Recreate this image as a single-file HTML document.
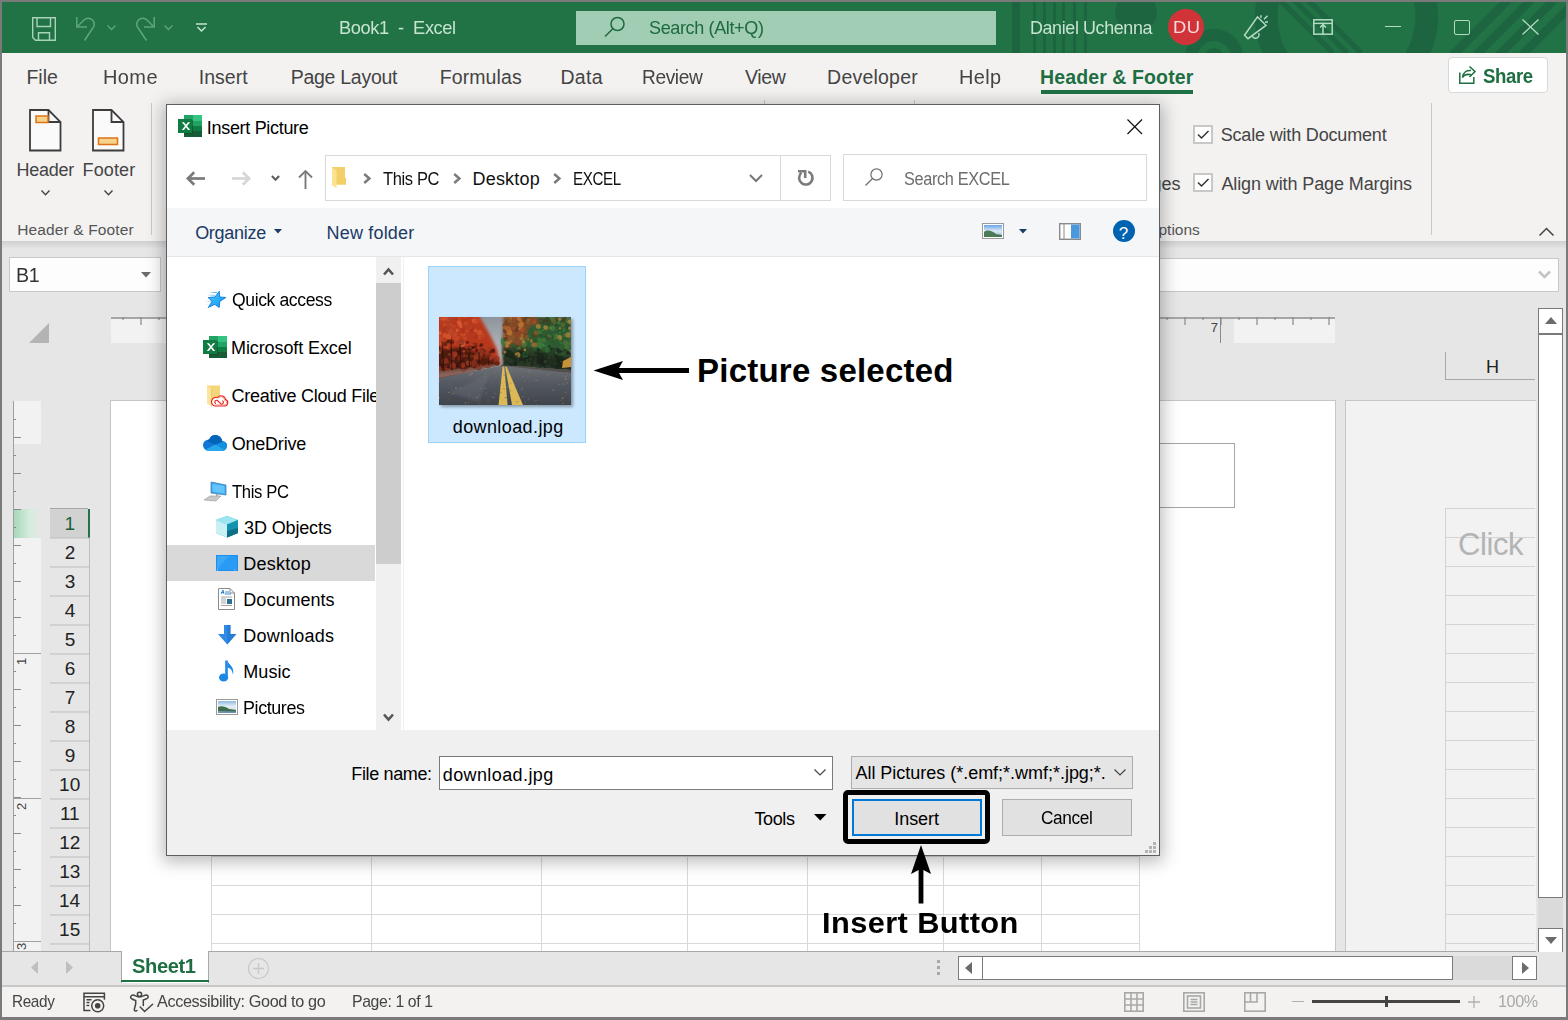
<!DOCTYPE html>
<html><head><meta charset="utf-8"><style>
html,body{margin:0;padding:0;width:1568px;height:1020px;overflow:hidden;background:#e6e6e6;}
body{position:relative;font-family:"Liberation Sans",sans-serif;}
.a{position:absolute;}
.t{position:absolute;white-space:pre;line-height:normal;}
svg{overflow:visible;}
</style></head><body>
<div class="a" style="left:0px;top:0px;width:1568px;height:1020px;background:#e6e6e6;"></div>
<div class="a" style="left:2px;top:2px;width:1564px;height:51px;background:#217346;"></div>
<svg class="a" style="left:1000px;top:2px;" width="566" height="51" viewBox="0 0 566 51">
<defs><clipPath id="tb"><rect x="0" y="0" width="566" height="51"/></clipPath></defs>
<g clip-path="url(#tb)" fill="none" stroke="#1d6440">
<rect x="12" y="0" width="8" height="51" fill="#1d6440" stroke="none"/>
<rect x="33" y="0" width="3" height="51" fill="#1d6440" stroke="none"/>
<rect x="43" y="0" width="3" height="51" fill="#1d6440" stroke="none"/>
<rect x="53" y="0" width="3" height="51" fill="#1d6440" stroke="none"/>
<rect x="62" y="0" width="3" height="51" fill="#1d6440" stroke="none"/>
<rect x="73" y="0" width="3" height="51" fill="#1d6440" stroke="none"/>
<rect x="84" y="0" width="3" height="51" fill="#1d6440" stroke="none"/>
<circle cx="136" cy="10" r="21" fill="#1d6440" stroke="none"/>
<circle cx="214" cy="56" r="10" fill="#1d6440" stroke="none"/>
<circle cx="214" cy="56" r="23" stroke-width="12"/>
<circle cx="346.5" cy="14.5" r="80.3" stroke-width="22.6"/>
<path d="M280 -2L333 51M294 -2L347 51M308 -2L361 51" stroke-width="5.5"/>
<path d="M453 53L508 -2M476 53L531 -2M499 53L554 -2M522 53L577 -2" stroke-width="8.5"/>
</g></svg>
<svg class="a" style="left:32px;top:17px;" width="24" height="24" viewBox="0 0 24 24"><g fill="none" stroke="#a9d3b9" stroke-width="1.4"><path d="M0.7 0.7H23.3V23.3H3.5L0.7 20.5Z"/><path d="M5 0.7V9.5H18.5V0.7"/><path d="M6.5 23.3V15.8H17.5V23.3"/></g></svg>
<svg class="a" style="left:76px;top:17px;" width="22" height="24" viewBox="0 0 22 24"><g fill="none" stroke="#5fa57d" stroke-width="1.5"><path d="M0.8 0V10H11"/><path d="M1.5 9.5L8 3A6 6 0 0 1 16.5 11.5L8.5 23.5"/></g></svg>
<svg class="a" style="left:107px;top:25px;" width="9" height="6" viewBox="0 0 9 6"><path d="M0.5 0.5L4.5 4.5L8.5 0.5" fill="none" stroke="#5fa57d" stroke-width="1.3"/></svg>
<svg class="a" style="left:133px;top:17px;" width="22" height="24" viewBox="0 0 22 24"><g fill="none" stroke="#5fa57d" stroke-width="1.5"><path d="M21.2 0V10H11"/><path d="M20.5 9.5L14 3A6 6 0 0 0 5.5 11.5L13.5 23.5"/></g></svg>
<svg class="a" style="left:164px;top:25px;" width="9" height="6" viewBox="0 0 9 6"><path d="M0.5 0.5L4.5 4.5L8.5 0.5" fill="none" stroke="#5fa57d" stroke-width="1.3"/></svg>
<svg class="a" style="left:196px;top:23px;" width="11" height="9" viewBox="0 0 11 9"><g fill="none" stroke="#c8e5d2" stroke-width="1.5"><path d="M0 1H11"/><path d="M1.5 4L5.5 8L9.5 4"/></g></svg>
<div class="t" style="left:338.50px;top:17.20px;font-size:19px;color:#c6e4d0;letter-spacing:-0.400px;transform:scaleX(0.9587);transform-origin:0 0;">Book1  -  Excel</div>
<div class="a" style="left:576px;top:11px;width:420px;height:33.5px;background:#a0cdb3;"></div>
<svg class="a" style="left:604px;top:16px;" width="22" height="22" viewBox="0 0 22 22"><g fill="none" stroke="#1e6a40" stroke-width="1.5"><circle cx="13.5" cy="8" r="6.5"/><path d="M8.8 12.7L1 20.5"/></g></svg>
<div class="t" style="left:649.19px;top:16.50px;font-size:19px;color:#1e6a40;letter-spacing:-0.400px;transform:scaleX(0.9499);transform-origin:0 0;">Search (Alt+Q)</div>
<div class="t" style="left:1029.52px;top:16.50px;font-size:19px;color:#c6e4d0;letter-spacing:-0.400px;transform:scaleX(0.9419);transform-origin:0 0;">Daniel Uchenna</div>
<svg class="a" style="left:1168px;top:9px;" width="36" height="36" viewBox="0 0 36 36"><circle cx="18" cy="18" r="18" fill="#d13438"/></svg>
<div class="t" style="left:1172.99px;top:18.00px;font-size:17px;color:#f6dcdc;letter-spacing:0.400px;transform:scaleX(1.0789);transform-origin:0 0;">DU</div>
<svg class="a" style="left:1243px;top:14px;" width="27" height="27" viewBox="0 0 27 27"><g fill="none" stroke="#b4dcc2" stroke-width="1.5"><path d="M1.5 21.2L14.5 2.9L23 11.3L5 24.7Z"/><path d="M9.5 22.3A3.2 3.2 0 0 0 15.6 19.2"/><path d="M18 1.2V3.8M21 5.3L24.5 1.8M22 7.9H25"/></g></svg>
<svg class="a" style="left:1313px;top:19px;" width="20" height="16" viewBox="0 0 20 16"><g fill="none" stroke="#b4dcc2" stroke-width="1.5"><rect x="0.8" y="0.8" width="18.4" height="14.4"/><path d="M0.8 4.4H19.2"/><path d="M10 15V5.5M7 8.5L10 5.5L13 8.5"/></g></svg>
<div class="a" style="left:1385px;top:26px;width:16px;height:1.3px;background:#b4dcc2;"></div>
<div class="a" style="left:1454px;top:19.5px;width:15.5px;height:15.5px;border:1.3px solid #b4dcc2;border-radius:2px;box-sizing:border-box;"></div>
<svg class="a" style="left:1522px;top:19px;" width="17" height="16" viewBox="0 0 17 16"><path d="M0.5 0.5L16.5 15.5M16.5 0.5L0.5 15.5" stroke="#b4dcc2" stroke-width="1.3"/></svg>
<div class="a" style="left:0px;top:0px;width:1568px;height:2px;background:#7a7a7a;"></div>
<div class="a" style="left:0px;top:0px;width:2px;height:1020px;background:#7a7a7a;"></div>
<div class="a" style="left:1566px;top:0px;width:2px;height:1020px;background:#7a7a7a;"></div>
<div class="a" style="left:0px;top:1017px;width:1568px;height:3px;background:#7a7a7a;"></div>
<div class="a" style="left:2px;top:53px;width:1564px;height:188px;background:#f3f2f1;"></div>
<div class="a" style="left:2px;top:241px;width:1564px;height:8px;background:linear-gradient(#cfcfcf,#e6e6e6);"></div>
<div class="t" style="left:26.39px;top:66.20px;font-size:19.5px;color:#444444;letter-spacing:0.014px;">File</div>
<div class="t" style="left:103.35px;top:66.20px;font-size:19.5px;color:#444444;letter-spacing:0.400px;transform:scaleX(1.0241);transform-origin:0 0;">Home</div>
<div class="t" style="left:198.70px;top:66.20px;font-size:19.5px;color:#444444;letter-spacing:0.040px;">Insert</div>
<div class="t" style="left:290.69px;top:66.20px;font-size:19.5px;color:#444444;letter-spacing:-0.274px;">Page Layout</div>
<div class="t" style="left:439.69px;top:66.20px;font-size:19.5px;color:#444444;letter-spacing:0.104px;">Formulas</div>
<div class="t" style="left:560.39px;top:66.20px;font-size:19.5px;color:#444444;letter-spacing:0.338px;">Data</div>
<div class="t" style="left:642.12px;top:66.20px;font-size:19.5px;color:#444444;letter-spacing:-0.400px;transform:scaleX(0.9818);transform-origin:0 0;">Review</div>
<div class="t" style="left:744.90px;top:66.20px;font-size:19.5px;color:#444444;letter-spacing:-0.359px;">View</div>
<div class="t" style="left:827.09px;top:66.20px;font-size:19.5px;color:#444444;letter-spacing:0.216px;">Developer</div>
<div class="t" style="left:958.66px;top:66.20px;font-size:19.5px;color:#444444;letter-spacing:0.400px;transform:scaleX(1.0210);transform-origin:0 0;">Help</div>
<div class="t" style="left:1040.08px;top:66.20px;font-size:19.5px;color:#1e6e42;font-weight:bold;letter-spacing:0.107px;">Header &amp; Footer</div>
<div class="a" style="left:1041px;top:90.3px;width:152px;height:4px;background:#1e7145;"></div>
<div class="a" style="left:1447.5px;top:57px;width:100px;height:35.5px;background:#fff;border:1px solid #d8d8d8;border-radius:4px;box-sizing:border-box;"></div>
<svg class="a" style="left:1459px;top:66px;" width="17" height="18" viewBox="0 0 17 18"><g fill="none" stroke="#1e6e42" stroke-width="1.5"><path d="M0.8 6.5V17.2H14.8V11"/><path d="M3.5 11.5C4 6 8 4 12 4.5"/><path d="M3.5 11.5C5 8.5 9 8 12.5 8.8"/><path d="M10.5 0.5L16 5.5L10.5 11"/></g></svg>
<div class="t" style="left:1483.44px;top:65.00px;font-size:20px;color:#1e6e42;font-weight:bold;letter-spacing:-0.400px;transform:scaleX(0.9298);transform-origin:0 0;">Share</div>
<svg class="a" style="left:29px;top:109px;" width="33" height="43" viewBox="0 0 33 43"><path d="M1 1H19.5L31.5 13V41.5H1Z" fill="#fafafa" stroke="#3c3c3c" stroke-width="1.8"/><path d="M19.5 1V13H31.5" fill="none" stroke="#3c3c3c" stroke-width="1.8"/><rect x="7" y="7" width="12" height="6.5" fill="#f6d38b" stroke="#e07318" stroke-width="1.5"/></svg>
<svg class="a" style="left:92px;top:109px;" width="33" height="43" viewBox="0 0 33 43"><path d="M1 1H19.5L31.5 13V41.5H1Z" fill="#fafafa" stroke="#3c3c3c" stroke-width="1.8"/><path d="M19.5 1V13H31.5" fill="none" stroke="#3c3c3c" stroke-width="1.8"/><rect x="6.5" y="29" width="19" height="6.5" fill="#f6d38b" stroke="#e07318" stroke-width="1.5"/></svg>
<div class="t" style="left:16.52px;top:160.00px;font-size:18px;color:#444444;letter-spacing:-0.257px;">Header</div>
<div class="t" style="left:82.52px;top:160.00px;font-size:18px;color:#444444;letter-spacing:0.147px;">Footer</div>
<svg class="a" style="left:41px;top:190px;" width="9" height="6" viewBox="0 0 9 6"><path d="M0.5 0.5L4.5 4.8L8.5 0.5" fill="none" stroke="#444" stroke-width="1.4"/></svg>
<svg class="a" style="left:104px;top:190px;" width="9" height="6" viewBox="0 0 9 6"><path d="M0.5 0.5L4.5 4.8L8.5 0.5" fill="none" stroke="#444" stroke-width="1.4"/></svg>
<div class="t" style="left:17.22px;top:220.60px;font-size:15.5px;color:#555;letter-spacing:0.138px;">Header &amp; Footer</div>
<div class="a" style="left:151px;top:103px;width:1px;height:132px;background:#c8c8c8;"></div>
<div class="a" style="left:764px;top:100px;width:1px;height:4px;background:#c8c8c8;"></div>
<div class="a" style="left:914px;top:100px;width:1px;height:4px;background:#c8c8c8;"></div>
<div class="a" style="left:1431px;top:103px;width:1px;height:132px;background:#c8c8c8;"></div>
<div class="t" style="left:954.82px;top:174.00px;font-size:18px;color:#444444;">Different Odd &amp; Even Pages</div>
<div class="a" style="left:1193px;top:124.5px;width:19.5px;height:19px;background:#fff;border:2px solid #c8c8c8;box-sizing:border-box;"></div>
<svg class="a" style="left:1196.5px;top:129.5px;" width="13" height="10" viewBox="0 0 13 10"><path d="M1 4.5L4.5 8L11.5 1" fill="none" stroke="#333" stroke-width="1.5"/></svg>
<div class="a" style="left:1193px;top:173.3px;width:19.5px;height:19px;background:#fff;border:2px solid #c8c8c8;box-sizing:border-box;"></div>
<svg class="a" style="left:1196.5px;top:178.3px;" width="13" height="10" viewBox="0 0 13 10"><path d="M1 4.5L4.5 8L11.5 1" fill="none" stroke="#333" stroke-width="1.5"/></svg>
<div class="t" style="left:1220.69px;top:125.30px;font-size:18px;color:#444444;letter-spacing:-0.173px;">Scale with Document</div>
<div class="t" style="left:1221.45px;top:174.00px;font-size:18px;color:#444444;letter-spacing:-0.110px;">Align with Page Margins</div>
<div class="t" style="left:1146.41px;top:220.60px;font-size:15.5px;color:#555;">Options</div>
<svg class="a" style="left:1539px;top:227px;" width="15" height="9" viewBox="0 0 15 9"><path d="M0.5 8.5L7.5 1.5L14.5 8.5" fill="none" stroke="#444" stroke-width="1.5"/></svg>
<div class="a" style="left:9px;top:257px;width:151.5px;height:34.5px;background:#fdfdfd;border:1px solid #c8c8c8;box-sizing:border-box;"></div>
<div class="t" style="left:15.88px;top:264.00px;font-size:20px;color:#333;letter-spacing:-0.400px;transform:scaleX(0.9790);transform-origin:0 0;">B1</div>
<svg class="a" style="left:141px;top:272px;" width="10" height="6" viewBox="0 0 10 6"><path d="M0 0H10L5 5.5Z" fill="#6b6b6b"/></svg>
<div class="a" style="left:600px;top:257.5px;width:958.5px;height:34px;background:#fdfdfd;border:1px solid #c8c8c8;box-sizing:border-box;"></div>
<svg class="a" style="left:1538px;top:270px;" width="13" height="9" viewBox="0 0 13 9"><path d="M1 1.5L6.5 7L12 1.5" fill="none" stroke="#c4c4c4" stroke-width="2.5"/></svg>
<svg class="a" style="left:29px;top:322.5px;" width="20" height="20" viewBox="0 0 20 20"><path d="M20 0V20H0Z" fill="#b4b4b4"/></svg>
<div class="a" style="left:111px;top:317px;width:1224px;height:26px;background:#f2f2f2;"></div>
<div class="a" style="left:211px;top:317px;width:1023px;height:26px;background:#e6e6e6;"></div>
<div class="a" style="left:111px;top:317px;width:1224px;height:1.5px;background:#a6a6a6;"></div>
<svg class="a" style="left:111px;top:317px;" width="1224" height="26" viewBox="0 0 1224 26"><rect x="11.4" y="0" width="1.2" height="3" fill="#8a8a8a"/><rect x="29.4" y="0" width="1.2" height="8" fill="#8a8a8a"/><rect x="47.4" y="0" width="1.2" height="3" fill="#8a8a8a"/><rect x="65.4" y="0" width="1.2" height="8" fill="#8a8a8a"/><rect x="83.4" y="0" width="1.2" height="3" fill="#8a8a8a"/><rect x="101.4" y="0" width="1.2" height="8" fill="#8a8a8a"/><rect x="119.4" y="0" width="1.2" height="3" fill="#8a8a8a"/><rect x="137.4" y="0" width="1.2" height="8" fill="#8a8a8a"/><rect x="155.4" y="0" width="1.2" height="3" fill="#8a8a8a"/><rect x="173.4" y="0" width="1.2" height="8" fill="#8a8a8a"/><rect x="191.4" y="0" width="1.2" height="3" fill="#8a8a8a"/><rect x="209.4" y="0" width="1.2" height="8" fill="#8a8a8a"/><rect x="227.4" y="0" width="1.2" height="3" fill="#8a8a8a"/><rect x="245.4" y="0" width="1.2" height="8" fill="#8a8a8a"/><rect x="263.4" y="0" width="1.2" height="3" fill="#8a8a8a"/><rect x="281.4" y="0" width="1.2" height="8" fill="#8a8a8a"/><rect x="299.4" y="0" width="1.2" height="3" fill="#8a8a8a"/><rect x="317.4" y="0" width="1.2" height="8" fill="#8a8a8a"/><rect x="335.4" y="0" width="1.2" height="3" fill="#8a8a8a"/><rect x="353.4" y="0" width="1.2" height="8" fill="#8a8a8a"/><rect x="371.4" y="0" width="1.2" height="3" fill="#8a8a8a"/><rect x="389.4" y="0" width="1.2" height="8" fill="#8a8a8a"/><rect x="407.4" y="0" width="1.2" height="3" fill="#8a8a8a"/><rect x="425.4" y="0" width="1.2" height="8" fill="#8a8a8a"/><rect x="443.4" y="0" width="1.2" height="3" fill="#8a8a8a"/><rect x="461.4" y="0" width="1.2" height="8" fill="#8a8a8a"/><rect x="479.4" y="0" width="1.2" height="3" fill="#8a8a8a"/><rect x="497.4" y="0" width="1.2" height="8" fill="#8a8a8a"/><rect x="515.4" y="0" width="1.2" height="3" fill="#8a8a8a"/><rect x="533.4" y="0" width="1.2" height="8" fill="#8a8a8a"/><rect x="551.4" y="0" width="1.2" height="3" fill="#8a8a8a"/><rect x="569.4" y="0" width="1.2" height="8" fill="#8a8a8a"/><rect x="587.4" y="0" width="1.2" height="3" fill="#8a8a8a"/><rect x="605.4" y="0" width="1.2" height="8" fill="#8a8a8a"/><rect x="623.4" y="0" width="1.2" height="3" fill="#8a8a8a"/><rect x="641.4" y="0" width="1.2" height="8" fill="#8a8a8a"/><rect x="659.4" y="0" width="1.2" height="3" fill="#8a8a8a"/><rect x="677.4" y="0" width="1.2" height="8" fill="#8a8a8a"/><rect x="695.4" y="0" width="1.2" height="3" fill="#8a8a8a"/><rect x="713.4" y="0" width="1.2" height="8" fill="#8a8a8a"/><rect x="731.4" y="0" width="1.2" height="3" fill="#8a8a8a"/><rect x="749.4" y="0" width="1.2" height="8" fill="#8a8a8a"/><rect x="767.4" y="0" width="1.2" height="3" fill="#8a8a8a"/><rect x="785.4" y="0" width="1.2" height="8" fill="#8a8a8a"/><rect x="803.4" y="0" width="1.2" height="3" fill="#8a8a8a"/><rect x="821.4" y="0" width="1.2" height="8" fill="#8a8a8a"/><rect x="839.4" y="0" width="1.2" height="3" fill="#8a8a8a"/><rect x="857.4" y="0" width="1.2" height="8" fill="#8a8a8a"/><rect x="875.4" y="0" width="1.2" height="3" fill="#8a8a8a"/><rect x="893.4" y="0" width="1.2" height="8" fill="#8a8a8a"/><rect x="911.4" y="0" width="1.2" height="3" fill="#8a8a8a"/><rect x="929.4" y="0" width="1.2" height="8" fill="#8a8a8a"/><rect x="947.4" y="0" width="1.2" height="3" fill="#8a8a8a"/><rect x="965.4" y="0" width="1.2" height="8" fill="#8a8a8a"/><rect x="983.4" y="0" width="1.2" height="3" fill="#8a8a8a"/><rect x="1001.4" y="0" width="1.2" height="8" fill="#8a8a8a"/><rect x="1019.4" y="0" width="1.2" height="3" fill="#8a8a8a"/><rect x="1037.4" y="0" width="1.2" height="8" fill="#8a8a8a"/><rect x="1055.4" y="0" width="1.2" height="3" fill="#8a8a8a"/><rect x="1073.4" y="0" width="1.2" height="8" fill="#8a8a8a"/><rect x="1091.4" y="0" width="1.2" height="3" fill="#8a8a8a"/><rect x="1109.4" y="0" width="1.2" height="8" fill="#8a8a8a"/><rect x="1127.4" y="0" width="1.2" height="3" fill="#8a8a8a"/><rect x="1145.4" y="0" width="1.2" height="8" fill="#8a8a8a"/><rect x="1163.4" y="0" width="1.2" height="3" fill="#8a8a8a"/><rect x="1181.4" y="0" width="1.2" height="8" fill="#8a8a8a"/><rect x="1199.4" y="0" width="1.2" height="3" fill="#8a8a8a"/><rect x="1217.4" y="0" width="1.2" height="8" fill="#8a8a8a"/></svg>
<div class="a" style="left:1220px;top:317px;width:1.2px;height:26px;background:#8a8a8a;"></div>
<div class="t" style="left:1210.85px;top:319.50px;font-size:13px;color:#444;">7</div>
<div class="a" style="left:1445px;top:352px;width:90px;height:28px;background:#e6e6e6;"></div>
<div class="a" style="left:1445px;top:352px;width:1px;height:28px;background:#a8a8a8;"></div>
<div class="a" style="left:1445px;top:379px;width:90px;height:1px;background:#a8a8a8;"></div>
<div class="t" style="left:1486.02px;top:357.00px;font-size:18px;color:#222;">H</div>
<div class="a" style="left:110px;top:400px;width:1226px;height:552px;background:#ffffff;border:1px solid #c6c6c6;box-sizing:border-box;"></div>
<div class="a" style="left:211px;top:443px;width:1024px;height:65px;border:1px solid #a6a6a6;box-sizing:border-box;"></div>
<svg class="a" style="left:0px;top:400px;" width="1336" height="551" viewBox="0 0 1336 551"><path d="M211 108.5H1140" stroke="#d9d9d9" stroke-width="1"/><path d="M211 137.5H1140" stroke="#d9d9d9" stroke-width="1"/><path d="M211 166.5H1140" stroke="#d9d9d9" stroke-width="1"/><path d="M211 195.5H1140" stroke="#d9d9d9" stroke-width="1"/><path d="M211 224.5H1140" stroke="#d9d9d9" stroke-width="1"/><path d="M211 253.5H1140" stroke="#d9d9d9" stroke-width="1"/><path d="M211 282.5H1140" stroke="#d9d9d9" stroke-width="1"/><path d="M211 311.5H1140" stroke="#d9d9d9" stroke-width="1"/><path d="M211 340.5H1140" stroke="#d9d9d9" stroke-width="1"/><path d="M211 369.5H1140" stroke="#d9d9d9" stroke-width="1"/><path d="M211 398.5H1140" stroke="#d9d9d9" stroke-width="1"/><path d="M211 427.5H1140" stroke="#d9d9d9" stroke-width="1"/><path d="M211 456.5H1140" stroke="#d9d9d9" stroke-width="1"/><path d="M211 485.5H1140" stroke="#d9d9d9" stroke-width="1"/><path d="M211 514.5H1140" stroke="#d9d9d9" stroke-width="1"/><path d="M211 543.5H1140" stroke="#d9d9d9" stroke-width="1"/><path d="M211.5 108V551" stroke="#d9d9d9" stroke-width="1"/><path d="M371.5 108V551" stroke="#d9d9d9" stroke-width="1"/><path d="M541.5 108V551" stroke="#d9d9d9" stroke-width="1"/><path d="M687.5 108V551" stroke="#d9d9d9" stroke-width="1"/><path d="M807.5 108V551" stroke="#d9d9d9" stroke-width="1"/><path d="M943.5 108V551" stroke="#d9d9d9" stroke-width="1"/><path d="M1041.5 108V551" stroke="#d9d9d9" stroke-width="1"/><path d="M1139.5 108V551" stroke="#d9d9d9" stroke-width="1"/></svg>
<div class="a" style="left:1344.5px;top:400px;width:221.5px;height:552px;background:#f2f2f2;"></div>
<div class="a" style="left:1344.5px;top:400px;width:1px;height:552px;background:#c6c6c6;"></div>
<div class="a" style="left:1344.5px;top:400px;width:191.5px;height:1px;background:#c6c6c6;"></div>
<svg class="a" style="left:1445px;top:400px;" width="90" height="551" viewBox="0 0 90 551"><path d="M0 108.5H90" stroke="#d4d4d4" stroke-width="1"/><path d="M0 137.5H90" stroke="#d4d4d4" stroke-width="1"/><path d="M0 166.5H90" stroke="#d4d4d4" stroke-width="1"/><path d="M0 195.5H90" stroke="#d4d4d4" stroke-width="1"/><path d="M0 224.5H90" stroke="#d4d4d4" stroke-width="1"/><path d="M0 253.5H90" stroke="#d4d4d4" stroke-width="1"/><path d="M0 282.5H90" stroke="#d4d4d4" stroke-width="1"/><path d="M0 311.5H90" stroke="#d4d4d4" stroke-width="1"/><path d="M0 340.5H90" stroke="#d4d4d4" stroke-width="1"/><path d="M0 369.5H90" stroke="#d4d4d4" stroke-width="1"/><path d="M0 398.5H90" stroke="#d4d4d4" stroke-width="1"/><path d="M0 427.5H90" stroke="#d4d4d4" stroke-width="1"/><path d="M0 456.5H90" stroke="#d4d4d4" stroke-width="1"/><path d="M0 485.5H90" stroke="#d4d4d4" stroke-width="1"/><path d="M0 514.5H90" stroke="#d4d4d4" stroke-width="1"/><path d="M0 543.5H90" stroke="#d4d4d4" stroke-width="1"/><path d="M0.5 108V551" stroke="#d4d4d4" stroke-width="1"/></svg>
<div class="t" style="left:1457.95px;top:527.00px;font-size:31px;color:#b4b4b4;letter-spacing:-0.400px;">Click</div>
<div class="a" style="left:1536px;top:300px;width:30px;height:652px;background:#e6e6e6;"></div>
<div class="a" style="left:50px;top:508.5px;width:40px;height:442.5px;background:#e6e6e6;"></div>
<div class="a" style="left:50px;top:508.5px;width:38px;height:29px;background:#d2d2d2;"></div>
<div class="a" style="left:88px;top:508.5px;width:2px;height:29px;background:#217346;"></div>
<svg class="a" style="left:50px;top:508.5px;" width="40" height="443" viewBox="0 0 40 443"><path d="M0 29.0H40" stroke="#bdbdbd" stroke-width="1"/><path d="M0 58.0H40" stroke="#bdbdbd" stroke-width="1"/><path d="M0 87.0H40" stroke="#bdbdbd" stroke-width="1"/><path d="M0 116.0H40" stroke="#bdbdbd" stroke-width="1"/><path d="M0 145.0H40" stroke="#bdbdbd" stroke-width="1"/><path d="M0 174.0H40" stroke="#bdbdbd" stroke-width="1"/><path d="M0 203.0H40" stroke="#bdbdbd" stroke-width="1"/><path d="M0 232.0H40" stroke="#bdbdbd" stroke-width="1"/><path d="M0 261.0H40" stroke="#bdbdbd" stroke-width="1"/><path d="M0 290.0H40" stroke="#bdbdbd" stroke-width="1"/><path d="M0 319.0H40" stroke="#bdbdbd" stroke-width="1"/><path d="M0 348.0H40" stroke="#bdbdbd" stroke-width="1"/><path d="M0 377.0H40" stroke="#bdbdbd" stroke-width="1"/><path d="M0 406.0H40" stroke="#bdbdbd" stroke-width="1"/><path d="M0 435.0H40" stroke="#bdbdbd" stroke-width="1"/><path d="M0 464.0H40" stroke="#bdbdbd" stroke-width="1"/><path d="M39.5 29V443" stroke="#bdbdbd" stroke-width="1"/></svg>
<div class="t" style="left:64.47px;top:513.30px;font-size:19px;color:#1f5f3b;">1</div>
<div class="t" style="left:64.73px;top:542.30px;font-size:19px;color:#222;">2</div>
<div class="t" style="left:64.77px;top:571.30px;font-size:19px;color:#222;">3</div>
<div class="t" style="left:64.78px;top:600.30px;font-size:19px;color:#222;">4</div>
<div class="t" style="left:64.73px;top:629.30px;font-size:19px;color:#222;">5</div>
<div class="t" style="left:64.66px;top:658.30px;font-size:19px;color:#222;">6</div>
<div class="t" style="left:64.73px;top:687.30px;font-size:19px;color:#222;">7</div>
<div class="t" style="left:64.73px;top:716.30px;font-size:19px;color:#222;">8</div>
<div class="t" style="left:64.70px;top:745.30px;font-size:19px;color:#222;">9</div>
<div class="t" style="left:59.10px;top:774.30px;font-size:19px;color:#222;">10</div>
<div class="t" style="left:59.88px;top:803.30px;font-size:19px;color:#222;">11</div>
<div class="t" style="left:59.22px;top:832.30px;font-size:19px;color:#222;">12</div>
<div class="t" style="left:59.15px;top:861.30px;font-size:19px;color:#222;">13</div>
<div class="t" style="left:59.00px;top:890.30px;font-size:19px;color:#222;">14</div>
<div class="t" style="left:59.12px;top:919.30px;font-size:19px;color:#222;">15</div>
<div class="a" style="left:50px;top:508px;width:38px;height:1px;background:#a8a8a8;"></div>
<div class="a" style="left:13px;top:401px;width:28px;height:550px;background:#f2f2f2;"></div>
<div class="a" style="left:13px;top:444px;width:28px;height:65px;background:#e6e6e6;"></div>
<div class="a" style="left:13px;top:509px;width:28px;height:29px;background:linear-gradient(90deg,#a3d7b8,#d6ecdd 60%,#e6e6e6);"></div>
<div class="a" style="left:12.5px;top:401px;width:1px;height:550px;background:#a0a0a0;"></div>
<svg class="a" style="left:14px;top:401px;" width="27" height="550" viewBox="0 0 27 550"><rect x="0" y="18" width="2" height="1" fill="#8a8a8a"/><rect x="0" y="36" width="7" height="1" fill="#8a8a8a"/><rect x="0" y="54" width="2" height="1" fill="#8a8a8a"/><rect x="0" y="72" width="7" height="1" fill="#8a8a8a"/><rect x="0" y="90" width="2" height="1" fill="#8a8a8a"/><rect x="0" y="108" width="7" height="1" fill="#8a8a8a"/><rect x="0" y="126" width="2" height="1" fill="#8a8a8a"/><rect x="0" y="144" width="7" height="1" fill="#8a8a8a"/><rect x="0" y="162" width="2" height="1" fill="#8a8a8a"/><rect x="0" y="180" width="7" height="1" fill="#8a8a8a"/><rect x="0" y="198" width="2" height="1" fill="#8a8a8a"/><rect x="0" y="216" width="7" height="1" fill="#8a8a8a"/><rect x="0" y="234" width="2" height="1" fill="#8a8a8a"/><rect x="0" y="252" width="7" height="1" fill="#8a8a8a"/><rect x="0" y="270" width="2" height="1" fill="#8a8a8a"/><rect x="0" y="288" width="7" height="1" fill="#8a8a8a"/><rect x="0" y="306" width="2" height="1" fill="#8a8a8a"/><rect x="0" y="324" width="7" height="1" fill="#8a8a8a"/><rect x="0" y="342" width="2" height="1" fill="#8a8a8a"/><rect x="0" y="360" width="7" height="1" fill="#8a8a8a"/><rect x="0" y="378" width="2" height="1" fill="#8a8a8a"/><rect x="0" y="396" width="7" height="1" fill="#8a8a8a"/><rect x="0" y="414" width="2" height="1" fill="#8a8a8a"/><rect x="0" y="432" width="7" height="1" fill="#8a8a8a"/><rect x="0" y="450" width="2" height="1" fill="#8a8a8a"/><rect x="0" y="468" width="7" height="1" fill="#8a8a8a"/><rect x="0" y="486" width="2" height="1" fill="#8a8a8a"/><rect x="0" y="504" width="7" height="1" fill="#8a8a8a"/><rect x="0" y="522" width="2" height="1" fill="#8a8a8a"/><rect x="0" y="540" width="7" height="1" fill="#8a8a8a"/></svg>
<div class="a" style="left:13px;top:653px;width:28px;height:1px;background:#a0a0a0;"></div>
<div class="a" style="left:13px;top:797.5px;width:28px;height:1px;background:#a0a0a0;"></div>
<div class="t" style="left:18px;top:655px;font-size:13px;line-height:13px;color:#444;transform:rotate(-90deg);">1</div>
<div class="t" style="left:18px;top:800px;font-size:13px;line-height:13px;color:#444;transform:rotate(-90deg);">2</div>
<div class="a" style="left:13px;top:941px;width:28px;height:1px;background:#a0a0a0;"></div>
<div class="t" style="left:18px;top:940px;font-size:13px;line-height:13px;color:#444;transform:rotate(-90deg);">3</div>
<div class="a" style="left:1538px;top:308px;width:25px;height:644px;background:#dadada;"></div>
<div class="a" style="left:1538px;top:308px;width:25px;height:25.5px;background:#fff;border:1px solid #7a7a7a;box-sizing:border-box;"></div>
<svg class="a" style="left:1544.5px;top:317px;" width="12" height="7" viewBox="0 0 12 7"><path d="M0 7H12L6 0Z" fill="#6b6b6b"/></svg>
<div class="a" style="left:1538px;top:334px;width:25px;height:563.5px;background:#fff;border:1px solid #7a7a7a;box-sizing:border-box;"></div>
<div class="a" style="left:1538px;top:928px;width:25px;height:24.5px;background:#fff;border:1px solid #7a7a7a;box-sizing:border-box;"></div>
<svg class="a" style="left:1544.5px;top:937px;" width="12" height="7" viewBox="0 0 12 7"><path d="M0 0H12L6 7Z" fill="#6b6b6b"/></svg>
<div class="a" style="left:2px;top:951px;width:1534px;height:1px;background:#9a9a9a;"></div>
<div class="a" style="left:2px;top:952px;width:1564px;height:33.5px;background:#e6e6e6;"></div>
<div class="a" style="left:2px;top:950.5px;width:119px;height:1.5px;background:#a8a8a8;"></div>
<div class="a" style="left:208px;top:950.5px;width:1328px;height:1.5px;background:#a8a8a8;"></div>
<svg class="a" style="left:30.5px;top:961px;" width="7" height="13" viewBox="0 0 7 13"><path d="M7 0V13L0 6.5Z" fill="#bfbfbf"/></svg>
<svg class="a" style="left:65.5px;top:961px;" width="7" height="13" viewBox="0 0 7 13"><path d="M0 0V13L7 6.5Z" fill="#bfbfbf"/></svg>
<div class="a" style="left:120.5px;top:951px;width:88px;height:32px;background:#ffffff;"></div>
<div class="a" style="left:120.5px;top:951px;width:1px;height:32px;background:#a8a8a8;"></div>
<div class="a" style="left:207.5px;top:951px;width:1px;height:32px;background:#a8a8a8;"></div>
<div class="a" style="left:120.5px;top:979.5px;width:88px;height:2.8px;background:#1e7145;"></div>
<div class="t" style="left:132.20px;top:954.00px;font-size:21px;color:#1e6e42;font-weight:bold;letter-spacing:-0.400px;transform:scaleX(0.9570);transform-origin:0 0;">Sheet1</div>
<svg class="a" style="left:248px;top:957.5px;" width="21" height="21" viewBox="0 0 21 21"><circle cx="10.5" cy="10.5" r="10" fill="none" stroke="#c8c8c8" stroke-width="1.2"/><path d="M10.5 5V16M5 10.5H16" stroke="#c8c8c8" stroke-width="1.3"/></svg>
<svg class="a" style="left:937px;top:960px;" width="3" height="16" viewBox="0 0 3 16"><rect x="0" y="0" width="3" height="3" fill="#a8a8a8"/><rect x="0" y="6" width="3" height="3" fill="#a8a8a8"/><rect x="0" y="12" width="3" height="3" fill="#a8a8a8"/></svg>
<div class="a" style="left:957.5px;top:955.5px;width:579.5px;height:24.5px;background:#dadada;"></div>
<div class="a" style="left:957.5px;top:955.5px;width:25px;height:24.5px;background:#fff;border:1px solid #7a7a7a;box-sizing:border-box;"></div>
<svg class="a" style="left:965px;top:962px;" width="7" height="12" viewBox="0 0 7 12"><path d="M7 0V12L0 6Z" fill="#6b6b6b"/></svg>
<div class="a" style="left:982px;top:955.5px;width:471px;height:24.5px;background:#fff;border:1.5px solid #7a7a7a;box-sizing:border-box;"></div>
<div class="a" style="left:1512px;top:955.5px;width:25px;height:24.5px;background:#fff;border:1px solid #7a7a7a;box-sizing:border-box;"></div>
<svg class="a" style="left:1522px;top:962px;" width="7" height="12" viewBox="0 0 7 12"><path d="M0 0V12L7 6Z" fill="#6b6b6b"/></svg>
<div class="a" style="left:2px;top:985.5px;width:1564px;height:31.5px;background:#f3f2f1;"></div>
<div class="a" style="left:2px;top:985px;width:1564px;height:1.5px;background:#c8c8c8;"></div>
<div class="t" style="left:11.54px;top:992.40px;font-size:17px;color:#444;letter-spacing:-0.400px;transform:scaleX(0.9005);transform-origin:0 0;">Ready</div>
<svg class="a" style="left:83px;top:992px;" width="24" height="21" viewBox="0 0 24 21"><g fill="none" stroke="#444" stroke-width="1.5"><path d="M1 1.3H21.4V4.8H1Z"/><path d="M21.4 4.8V7.7"/><path d="M1 4.8V18.5H7.4"/><path d="M3.5 7.7H8.5M3.5 10.5H6.5M3.5 13.5H6.3"/><circle cx="14.7" cy="13.7" r="6"/></g><circle cx="14.7" cy="13.7" r="2.8" fill="#444"/></svg>
<svg class="a" style="left:129px;top:990px;" width="25" height="23" viewBox="0 0 25 23"><g fill="none" stroke="#444" stroke-width="1.5" stroke-linecap="round"><circle cx="10.5" cy="4.3" r="2.1"/><path d="M4 9.5L6.7 10.5V14L5.3 19.5C5 21 7 21.5 8 20.5"/><path d="M4 9.5C2.5 9 1 8 1.8 6.3C2.8 4.8 5 5 6.5 5.8C8.5 7.5 12.5 7.5 14.5 5.8C16 5 18 4.5 19 6C19.8 7.5 18.5 8.5 17 9L14.3 10V15.5"/><path d="M11.2 17L15.6 21.5L23.6 14.3"/></g></svg>
<div class="t" style="left:156.76px;top:992.40px;font-size:17px;color:#444;letter-spacing:-0.400px;transform:scaleX(0.9555);transform-origin:0 0;">Accessibility: Good to go</div>
<div class="t" style="left:352.30px;top:992.40px;font-size:17px;color:#444;letter-spacing:-0.400px;transform:scaleX(0.9287);transform-origin:0 0;">Page: 1 of 1</div>
<svg class="a" style="left:1123.5px;top:991.5px;" width="20" height="20" viewBox="0 0 20 20"><g fill="none" stroke="#a8a8a8" stroke-width="1.6"><rect x="0.8" y="0.8" width="18.4" height="18.4"/><path d="M7 0.8V19.2M13 0.8V19.2M0.8 7H19.2M0.8 13H19.2"/></g></svg>
<svg class="a" style="left:1183px;top:991.5px;" width="22" height="20" viewBox="0 0 22 20"><g fill="none" stroke="#a8a8a8" stroke-width="1.6"><rect x="0.8" y="0.8" width="20.4" height="18.4"/><rect x="4.5" y="4" width="13" height="12"/><path d="M7.5 7.5H14.5M7.5 10H14.5M7.5 12.5H14.5"/></g></svg>
<svg class="a" style="left:1243.5px;top:991.5px;" width="22" height="20" viewBox="0 0 22 20"><g fill="none" stroke="#a8a8a8" stroke-width="1.6"><rect x="0.8" y="0.8" width="20.4" height="18.4"/><path d="M0.8 10H13V0.8M6.5 0.8V10"/></g></svg>
<div class="a" style="left:1292px;top:1001px;width:11.5px;height:1.2px;background:#b0b0b0;"></div>
<div class="a" style="left:1312px;top:1000.3px;width:148px;height:2.7px;background:#444;"></div>
<div class="a" style="left:1385px;top:996px;width:3px;height:11px;background:#444;"></div>
<svg class="a" style="left:1467.5px;top:996px;" width="12" height="12" viewBox="0 0 12 12"><path d="M6 0V12M0 6H12" stroke="#b0b0b0" stroke-width="1.3"/></svg>
<div class="t" style="left:1498.29px;top:992.30px;font-size:17px;color:#a8a8a8;letter-spacing:-0.400px;transform:scaleX(0.9478);transform-origin:0 0;">100%</div>
<div class="a" style="left:0px;top:1017px;width:1568px;height:3px;background:#7a7a7a;"></div>
<div class="a" style="left:166px;top:104px;width:994px;height:751.5px;background:#fff;border:1px solid #5e5e5e;box-sizing:border-box;box-shadow:0 3px 16px 3px rgba(0,0,0,0.27);"></div>
<svg class="a" style="left:178px;top:114px;" width="24" height="23" viewBox="0 0 24 23"><g shape-rendering="crispEdges"><rect x="6" y="1" width="18" height="6" fill="#21a366"/><rect x="15" y="1" width="9" height="6" fill="#33c481"/><rect x="6" y="7" width="18" height="5" fill="#21a366"/><rect x="6" y="12" width="18" height="5" fill="#107c41"/><rect x="6" y="17" width="18" height="6" fill="#185c37"/><rect x="6" y="6" width="9" height="14" fill="#0b3d22" opacity="0.5"/><rect x="0" y="5" width="14" height="14" fill="#107c41"/></g><path d="M3.8 8.3L7 12L3.8 16H6L8 13.3L10 16H12.2L9 12L12.2 8.3H10L8 10.8L6 8.3Z" fill="#fff"/></svg>
<div class="t" style="left:206.84px;top:118.00px;font-size:18px;color:#000;letter-spacing:-0.315px;">Insert Picture</div>
<svg class="a" style="left:1127px;top:119px;" width="15.5" height="15.5" viewBox="0 0 15.5 15.5"><path d="M0.5 0.5L15 15M15 0.5L0.5 15" stroke="#111" stroke-width="1.2"/></svg>
<svg class="a" style="left:186px;top:171px;" width="19" height="15" viewBox="0 0 19 15"><g fill="none" stroke="#7a7a7a" stroke-width="2.7"><path d="M2 7.5H19"/><path d="M8.2 1.2L1.9 7.5L8.2 13.8"/></g></svg>
<svg class="a" style="left:232px;top:171px;" width="19" height="15" viewBox="0 0 19 15"><g fill="none" stroke="#d6d6d6" stroke-width="2.7"><path d="M0 7.5H17"/><path d="M10.8 1.2L17.1 7.5L10.8 13.8"/></g></svg>
<svg class="a" style="left:271px;top:174.5px;" width="9" height="7" viewBox="0 0 9 7"><path d="M0.9 1L4.5 4.8L8.1 1" fill="none" stroke="#606060" stroke-width="2.1"/></svg>
<svg class="a" style="left:298px;top:170px;" width="15" height="19" viewBox="0 0 15 19"><g fill="none" stroke="#7a7a7a" stroke-width="1.9"><path d="M7.5 1.5V19"/><path d="M1 7.5L7.5 1L14 7.5"/></g></svg>
<div class="a" style="left:325px;top:154.5px;width:506px;height:46px;background:#fff;border:1px solid #d9d9d9;box-sizing:border-box;"></div>
<div class="a" style="left:780px;top:155px;width:1px;height:45px;background:#d9d9d9;"></div>
<svg class="a" style="left:332px;top:167px;" width="14" height="21.5" viewBox="0 0 14 21.5"><path d="M0 0H13V11H14V17.7H0Z" fill="#f3cf6a"/><path d="M0 0L4.5 3.8V21.3L0 18Z" fill="#fde38f"/></svg>
<svg class="a" style="left:363px;top:173px;" width="8" height="11" viewBox="0 0 8 11"><path d="M1.2 1L6.4 5.5L1.2 10" fill="none" stroke="#7b7b7b" stroke-width="2.5"/></svg>
<svg class="a" style="left:453px;top:173px;" width="8" height="11" viewBox="0 0 8 11"><path d="M1.2 1L6.4 5.5L1.2 10" fill="none" stroke="#7b7b7b" stroke-width="2.5"/></svg>
<svg class="a" style="left:553px;top:173px;" width="8" height="11" viewBox="0 0 8 11"><path d="M1.2 1L6.4 5.5L1.2 10" fill="none" stroke="#7b7b7b" stroke-width="2.5"/></svg>
<div class="t" style="left:383.13px;top:168.50px;font-size:18px;color:#111;letter-spacing:-0.400px;transform:scaleX(0.9165);transform-origin:0 0;">This PC</div>
<div class="t" style="left:472.51px;top:168.50px;font-size:18px;color:#111;letter-spacing:0.198px;">Desktop</div>
<div class="t" style="left:572.55px;top:168.50px;font-size:18px;color:#111;letter-spacing:-0.400px;transform:scaleX(0.8405);transform-origin:0 0;">EXCEL</div>
<svg class="a" style="left:749px;top:174px;" width="14" height="9" viewBox="0 0 14 9"><path d="M1 1L7 7L13 1" fill="none" stroke="#777" stroke-width="2"/></svg>
<svg class="a" style="left:797px;top:169px;" width="18" height="18" viewBox="0 0 18 18"><path d="M11.2 2.6A6.7 6.7 0 1 1 4.4 3.8" fill="none" stroke="#7b7b7b" stroke-width="2.6"/><path d="M1 2.3H8.2V9" fill="none" stroke="#7b7b7b" stroke-width="2.6"/></svg>
<div class="a" style="left:843px;top:154px;width:304px;height:46.5px;background:#fff;border:1px solid #d9d9d9;box-sizing:border-box;"></div>
<svg class="a" style="left:865px;top:168px;" width="18" height="18" viewBox="0 0 18 18"><g fill="none" stroke="#6e6e6e" stroke-width="1.2"><circle cx="11.5" cy="6.5" r="5.6"/><path d="M7.5 10.5L0.5 17.5"/></g></svg>
<div class="t" style="left:903.77px;top:168.60px;font-size:18px;color:#6d6d6d;letter-spacing:-0.400px;transform:scaleX(0.9067);transform-origin:0 0;">Search EXCEL</div>
<div class="a" style="left:167px;top:208px;width:992px;height:48px;background:#f5f6f7;"></div>
<div class="a" style="left:167px;top:255.5px;width:992px;height:1px;background:#e6e6e6;"></div>
<div class="t" style="left:195.15px;top:222.80px;font-size:18px;color:#1a3b66;letter-spacing:-0.274px;">Organize</div>
<svg class="a" style="left:274px;top:229px;" width="8" height="5" viewBox="0 0 8 5"><path d="M0 0H8L4 4.5Z" fill="#1a3b66"/></svg>
<div class="t" style="left:326.51px;top:222.80px;font-size:18px;color:#1a3b66;letter-spacing:0.191px;">New folder</div>
<svg class="a" style="left:982px;top:223px;" width="22" height="16" viewBox="0 0 22 16"><defs><linearGradient id="vg" x1="0" y1="0" x2="0" y2="1"><stop offset="0" stop-color="#6aa6e8"/><stop offset="0.5" stop-color="#dbe9f5"/><stop offset="1" stop-color="#9bb8d6"/></linearGradient></defs><rect x="0.5" y="0.5" width="21" height="15" fill="#fff" stroke="#9a9a9a"/><rect x="2" y="2" width="18" height="12" fill="url(#vg)"/><path d="M2 9C6 6 10 8 14 11L20 12V14H2Z" fill="#4d7a56"/></svg>
<svg class="a" style="left:1018.5px;top:228.8px;" width="8" height="4.5" viewBox="0 0 8 4.5"><path d="M0 0H8L4 4.5Z" fill="#1a3b66"/></svg>
<svg class="a" style="left:1059px;top:223px;" width="22" height="17" viewBox="0 0 22 17"><rect x="0.7" y="0.7" width="20.6" height="15.6" fill="#fff" stroke="#8a8a8a" stroke-width="1.4"/><rect x="12" y="1.5" width="8.5" height="14" fill="#4a98de"/><path d="M5 1V16" stroke="#8a8a8a" stroke-width="1"/></svg>
<svg class="a" style="left:1113px;top:220px;" width="22" height="22" viewBox="0 0 22 22"><circle cx="11" cy="11" r="11" fill="#0063b1"/></svg>
<div class="t" style="left:1118.82px;top:223.50px;font-size:17px;color:#fff;">?</div>
<div class="a" style="left:376px;top:257px;width:24.5px;height:473px;background:#f0f0f0;"></div>
<div class="a" style="left:376px;top:283px;width:24.5px;height:281px;background:#cdcdcd;"></div>
<svg class="a" style="left:383px;top:267px;" width="11" height="9" viewBox="0 0 11 9"><path d="M1 7.5L5.5 2.5L10 7.5" fill="none" stroke="#555" stroke-width="2.6" stroke-linecap="butt"/></svg>
<svg class="a" style="left:383px;top:712.5px;" width="11" height="9" viewBox="0 0 11 9"><path d="M1 1.5L5.5 6.5L10 1.5" fill="none" stroke="#555" stroke-width="2.6" stroke-linecap="butt"/></svg>
<div class="a" style="left:402.5px;top:257px;width:1px;height:473px;background:#f0f0f0;"></div>
<div class="a" style="left:167px;top:545px;width:208px;height:36px;background:#d9d9d9;"></div>
<div class="t" style="left:231.67px;top:289.60px;font-size:18px;color:#000;letter-spacing:-0.400px;transform:scaleX(0.9766);transform-origin:0 0;">Quick access</div>
<div class="t" style="left:231.01px;top:337.50px;font-size:18px;color:#000;letter-spacing:-0.096px;">Microsoft Excel</div>
<div class="a" style="left:170px;top:381.7px;width:206px;height:25.2px;overflow:hidden;">
<div class="t" style="left:61.60px;top:4.00px;font-size:18px;color:#000;letter-spacing:-0.293px;">Creative Cloud Files</div>
</div>
<div class="t" style="left:231.65px;top:433.60px;font-size:18px;color:#000;letter-spacing:-0.198px;">OneDrive</div>
<div class="t" style="left:232.33px;top:481.60px;font-size:18px;color:#000;letter-spacing:-0.400px;transform:scaleX(0.9248);transform-origin:0 0;">This PC</div>
<div class="t" style="left:244.12px;top:517.60px;font-size:18px;color:#000;letter-spacing:-0.150px;">3D Objects</div>
<div class="t" style="left:243.31px;top:553.80px;font-size:18px;color:#000;letter-spacing:0.232px;">Desktop</div>
<div class="t" style="left:243.31px;top:589.50px;font-size:18px;color:#000;letter-spacing:0.035px;">Documents</div>
<div class="t" style="left:243.31px;top:625.50px;font-size:18px;color:#000;letter-spacing:0.207px;">Downloads</div>
<div class="t" style="left:243.31px;top:661.50px;font-size:18px;color:#000;letter-spacing:0.039px;">Music</div>
<div class="t" style="left:243.32px;top:697.50px;font-size:18px;color:#000;letter-spacing:-0.400px;transform:scaleX(0.9948);transform-origin:0 0;">Pictures</div>
<div class="a" style="left:167px;top:730px;width:992px;height:125px;background:#f0f0f0;"></div>
<div class="t" style="left:351.31px;top:763.80px;font-size:18px;color:#000;letter-spacing:-0.357px;">File name:</div>
<div class="a" style="left:438.8px;top:756px;width:394.7px;height:34px;background:#fff;border:1px solid #7a7a7a;box-sizing:border-box;"></div>
<div class="t" style="left:442.73px;top:764.80px;font-size:18px;color:#000;letter-spacing:0.400px;">download.jpg</div>
<svg class="a" style="left:813.5px;top:769px;" width="12" height="7" viewBox="0 0 12 7"><path d="M0.5 0.5L6 6L11.5 0.5" fill="none" stroke="#444" stroke-width="1.2"/></svg>
<div class="a" style="left:851.4px;top:756.4px;width:281.4px;height:32.2px;background:#e5e5e5;border:1px solid #adadad;box-sizing:border-box;"></div>
<div class="t" style="left:855.46px;top:763.20px;font-size:18px;color:#000;letter-spacing:-0.021px;">All Pictures (*.emf;*.wmf;*.jpg;*.</div>
<svg class="a" style="left:1114px;top:769px;" width="12" height="7" viewBox="0 0 12 7"><path d="M0.5 0.5L6 6L11.5 0.5" fill="none" stroke="#444" stroke-width="1.2"/></svg>
<div class="t" style="left:754.39px;top:808.60px;font-size:18px;color:#000;letter-spacing:-0.374px;">Tools</div>
<svg class="a" style="left:814px;top:814px;" width="12.5" height="6.5" viewBox="0 0 12.5 6.5"><path d="M0 0H12.5L6.25 6.5Z" fill="#000"/></svg>
<div class="a" style="left:852px;top:799.2px;width:130px;height:36.4px;background:#e1e1e1;border:2px solid #0078d7;box-sizing:border-box;"></div>
<div class="t" style="left:894.34px;top:808.70px;font-size:18px;color:#000;letter-spacing:-0.080px;">Insert</div>
<div class="a" style="left:1002.3px;top:799.3px;width:129.5px;height:36.3px;background:#e1e1e1;border:1px solid #adadad;box-sizing:border-box;"></div>
<div class="t" style="left:1040.84px;top:808.40px;font-size:18px;color:#000;letter-spacing:-0.400px;transform:scaleX(0.9574);transform-origin:0 0;">Cancel</div>
<svg class="a" style="left:1145px;top:842px;" width="11" height="11" viewBox="0 0 11 11"><rect x="8" y="0" width="3" height="3" fill="#b4b4b4"/><rect x="4" y="4" width="3" height="3" fill="#b4b4b4"/><rect x="8" y="4" width="3" height="3" fill="#b4b4b4"/><rect x="0" y="8" width="3" height="3" fill="#b4b4b4"/><rect x="4" y="8" width="3" height="3" fill="#b4b4b4"/><rect x="8" y="8" width="3" height="3" fill="#b4b4b4"/></svg>
<svg class="a" style="left:203px;top:290px;" width="24" height="19" viewBox="0 0 24 19"><defs><linearGradient id="st" x1="0" y1="0" x2="1" y2="1"><stop offset="0" stop-color="#52c4ff"/><stop offset="1" stop-color="#0a9af5"/></linearGradient><linearGradient id="sl" x1="0" y1="0" x2="1" y2="0"><stop offset="0" stop-color="#8fd0f7" stop-opacity="0"/><stop offset="1" stop-color="#3aa8ee"/></linearGradient></defs><path d="M7.6 2.5H13.8M5.3 5.3H11.8M2 11.4H8.5M0.9 14.3H5.9" stroke="url(#sl)" stroke-width="1.1"/><path d="M16.2 1.4L16.8 7L22.8 7.5L16.8 11.4L16.2 17.5L11.8 14.3L5.3 17.5L9.1 11.4L5.1 7.5L12 7Z" fill="url(#st)" stroke="#0a78d6" stroke-width="0.9" stroke-linejoin="round"/></svg>
<svg class="a" style="left:203px;top:335px;" width="24" height="23" viewBox="0 0 24 23"><g shape-rendering="crispEdges"><rect x="6" y="1" width="18" height="6" fill="#21a366"/><rect x="15" y="1" width="9" height="6" fill="#33c481"/><rect x="6" y="7" width="18" height="5" fill="#21a366"/><rect x="6" y="12" width="18" height="5" fill="#107c41"/><rect x="6" y="17" width="18" height="6" fill="#185c37"/><rect x="6" y="6" width="9" height="14" fill="#0b3d22" opacity="0.5"/><rect x="0" y="5" width="14" height="14" fill="#107c41"/></g><path d="M3.8 8.3L7 12L3.8 16H6L8 13.3L10 16H12.2L9 12L12.2 8.3H10L8 10.8L6 8.3Z" fill="#fff"/></svg>
<svg class="a" style="left:207px;top:384.5px;" width="21" height="22" viewBox="0 0 21 22"><path d="M0 0.5H13V18H0Z" fill="#f4d57a"/><path d="M0 0.5L4.5 4V21.5L0 18.5Z" fill="#fce49c"/><path d="M4.5 4V21.5" stroke="#e9c15a" stroke-width="0.6"/><path d="M7.5 21H17.5A3.3 3.3 0 0 0 18.6 14.6A4.5 4.5 0 0 0 10.6 12.5A3.3 3.3 0 0 0 7.5 21Z" fill="#fff" stroke="#e8211c" stroke-width="1.1"/><path d="M8.3 19.9H17.2A2.2 2.2 0 0 0 17.6 15.5A3.5 3.5 0 0 0 11 13.7" fill="none" stroke="#f06a5a" stroke-width="0.6"/><path d="M9 18.6A1.7 1.7 0 1 1 11 16.2L13.2 18.2A1.7 1.7 0 1 0 15.2 15.8" fill="none" stroke="#e8211c" stroke-width="1.1"/></svg>
<svg class="a" style="left:203px;top:435px;" width="24" height="16" viewBox="0 0 24 16"><defs><clipPath id="odc"><ellipse cx="12.5" cy="7" rx="6.8" ry="7"/><ellipse cx="6.2" cy="10.2" rx="6.2" ry="5.8"/><ellipse cx="18.6" cy="11" rx="5.4" ry="5"/><rect x="6" y="9" width="13" height="7"/></clipPath></defs><g clip-path="url(#odc)"><rect x="0" y="0" width="24" height="16" fill="#0f78d4"/><path d="M5 0H20V6.5L12 10L5 6Z" fill="#0364b8"/><path d="M12 10L20 6.5L24 8V16H14Z" fill="#1490df"/><path d="M0 16L12 9.5L24 16Z" fill="#28a8ea"/></g></svg>
<svg class="a" style="left:204px;top:481px;" width="23" height="21" viewBox="0 0 23 21"><path d="M7 1L22 4V14L7 12Z" fill="#36a9f0" stroke="#4a7fb0" stroke-width="0.8"/><path d="M8.5 3L20.5 5V12.5L8.5 10.8Z" fill="#63c5ff"/><path d="M13 13V16" stroke="#888" stroke-width="1.2"/><path d="M0 19L6 15H17L12 20Z" fill="#c9c9c9" stroke="#999" stroke-width="0.6"/></svg>
<svg class="a" style="left:216px;top:516.3px;" width="22" height="21.5" viewBox="0 0 22 21.5"><path d="M11 0L22 4V17L11 21.5L0 17V4Z" fill="#2fb8cf"/><path d="M11 0L22 4L11 8.5L0 4Z" fill="#9ee6ef"/><path d="M0 4L11 8.5V21.5L0 17Z" fill="#c9f0f5"/><path d="M11 8.5L22 4V17L11 21.5Z" fill="#1592ad"/><path d="M11 15L22 12V17L11 21.5Z" fill="#0c6f86"/></svg>
<svg class="a" style="left:216px;top:555.3px;" width="22" height="16" viewBox="0 0 22 16"><rect x="0" y="0" width="22" height="16" fill="#1d8ff0"/><rect x="1" y="1" width="20" height="13.5" fill="#3aa7f7"/><path d="M1 14.5L13 1H21V14.5Z" fill="#2a9bf4"/><path d="M1 15H21" stroke="#e8f4ff" stroke-width="0.8" stroke-dasharray="1 16.5"/></svg>
<svg class="a" style="left:218.2px;top:587.6px;" width="17" height="22" viewBox="0 0 17 22"><path d="M0.5 0.5H12L16.5 5V21.5H0.5Z" fill="#fff" stroke="#8c8c8c"/><path d="M12 0.5V5H16.5" fill="none" stroke="#8c8c8c"/><path d="M3 6L5 2L6 6M3.5 4.5H6" fill="none" stroke="#1e78c8" stroke-width="0.9"/><path d="M7 4H11M7 6H13" stroke="#1e78c8" stroke-width="0.9"/><path d="M3 9H14M3 11H8M3 13H8M3 15H8M3 17.5H14" stroke="#9a9a9a" stroke-width="0.9"/><rect x="9" y="11" width="5" height="5" fill="#2a6f96"/></svg>
<svg class="a" style="left:217.6px;top:624.7px;" width="18.5" height="19.5" viewBox="0 0 18.5 19.5"><path d="M6 0H12.5V9H18.5L9.25 19.5L0 9H6Z" fill="#2f8ae5"/><path d="M9.25 0H12.5V9H18.5L9.25 19.5Z" fill="#1f6fc7" opacity="0.5"/></svg>
<svg class="a" style="left:219px;top:659.8px;" width="16.5" height="22" viewBox="0 0 16.5 22"><path d="M7.5 0.5V16" stroke="#1e88e5" stroke-width="2.6"/><ellipse cx="4.6" cy="17.5" rx="4.6" ry="4" fill="#1e88e5"/><path d="M8.5 1C10 5 16 7 14 15C13.5 10 11 8 8.5 7.5Z" fill="#1e88e5"/></svg>
<svg class="a" style="left:216px;top:698.8px;" width="22" height="16" viewBox="0 0 22 16"><defs><linearGradient id="pg" x1="0" y1="0" x2="0" y2="1"><stop offset="0" stop-color="#8fb8e0"/><stop offset="0.45" stop-color="#e6eef6"/><stop offset="1" stop-color="#b9cde0"/></linearGradient></defs><rect x="0.5" y="0.5" width="21" height="15" fill="#fff" stroke="#9a9a9a"/><rect x="2" y="2" width="18" height="12" fill="url(#pg)"/><path d="M2 8C5 6.5 9 7 13 10L20 11V14H2Z" fill="#3f6e4c"/><path d="M2 12L20 12.5V14H2Z" fill="#6f93b5"/></svg>
<div class="a" style="left:428px;top:266px;width:158px;height:177px;background:#cce8ff;border:1px solid #99d1ff;box-sizing:border-box;"></div>
<div class="a" style="left:439px;top:317px;width:132px;height:88px;box-shadow:2px 2px 3px rgba(0,0,0,0.35);"></div>
<svg class="a" style="left:439px;top:317px;" width="132" height="88" viewBox="0 0 132 88">
<defs>
<filter id="bl" x="-10%" y="-10%" width="120%" height="120%"><feGaussianBlur stdDeviation="1.4"/></filter>
<filter id="bl3" x="-10%" y="-10%" width="120%" height="120%"><feGaussianBlur stdDeviation="0.4"/></filter>
<filter id="bl2" x="-10%" y="-10%" width="120%" height="120%"><feGaussianBlur stdDeviation="0.6"/></filter>
<linearGradient id="sky" x1="0" y1="0" x2="0" y2="1"><stop offset="0" stop-color="#8e949c"/><stop offset="0.55" stop-color="#c4c7cc"/><stop offset="1" stop-color="#e8e0da"/></linearGradient>
<linearGradient id="road" x1="0" y1="0" x2="0" y2="1"><stop offset="0" stop-color="#6e7278"/><stop offset="0.4" stop-color="#555a61"/><stop offset="1" stop-color="#3e4249"/></linearGradient>
<clipPath id="tc"><rect x="0" y="0" width="132" height="88"/></clipPath>
</defs>
<g clip-path="url(#tc)">
<rect x="0" y="0" width="132" height="88" fill="url(#sky)"/>
<g filter="url(#bl)">
<path d="M-5 -5H38L50 16L58 32L62 48L-5 56Z" fill="#b8391c"/>
<path d="M-5 32L25 30L48 40L62 48L-5 56Z" fill="#4e1a10"/>
<path d="M65 0H132V54L64 49L63 30Z" fill="#3a4028"/>
<path d="M64 0L98 -5L100 15L88 28L65 30Z" fill="#8a4a26"/>
<path d="M88 8L132 4V42L100 42L86 28Z" fill="#2f5a30"/>
<path d="M64 32L100 34L132 40V54L64 49Z" fill="#1c281c"/>
</g>
<g filter="url(#bl3)"><circle cx="22.5" cy="27.2" r="2.3" fill="#c8442a" opacity="0.75"/><circle cx="119.9" cy="34.4" r="2.2" fill="#18221a" opacity="0.75"/><circle cx="87.2" cy="33.3" r="1.3" fill="#2f6a34" opacity="0.75"/><circle cx="1.9" cy="48.9" r="2.2" fill="#3c120c" opacity="0.75"/><circle cx="57.8" cy="46.7" r="2.0" fill="#8e3420" opacity="0.75"/><circle cx="-2.4" cy="2.0" r="2.3" fill="#a83218" opacity="0.75"/><circle cx="134.4" cy="46.6" r="2.4" fill="#22321f" opacity="0.75"/><circle cx="67.8" cy="-1.2" r="2.1" fill="#a8502a" opacity="0.75"/><circle cx="113.8" cy="19.8" r="2.9" fill="#2f6a34" opacity="0.75"/><circle cx="26.5" cy="51.7" r="1.1" fill="#a03a20" opacity="0.75"/><circle cx="104.4" cy="12.9" r="1.2" fill="#4a7a38" opacity="0.75"/><circle cx="101.6" cy="4.0" r="1.5" fill="#2f6a34" opacity="0.75"/><circle cx="23.0" cy="27.0" r="3.0" fill="#d9633a" opacity="0.75"/><circle cx="85.8" cy="3.9" r="1.8" fill="#7a4a24" opacity="0.75"/><circle cx="134.7" cy="-1.8" r="1.4" fill="#5a6a30" opacity="0.75"/><circle cx="85.6" cy="2.9" r="3.0" fill="#7a4a24" opacity="0.75"/><circle cx="-1.7" cy="33.0" r="2.7" fill="#5a1c12" opacity="0.75"/><circle cx="9.4" cy="31.4" r="1.5" fill="#b83a1f" opacity="0.75"/><circle cx="82.9" cy="4.5" r="2.2" fill="#b8652e" opacity="0.75"/><circle cx="116.6" cy="7.8" r="1.3" fill="#2a4a2a" opacity="0.75"/><circle cx="81.2" cy="39.8" r="1.3" fill="#18221a" opacity="0.75"/><circle cx="118.7" cy="32.6" r="1.8" fill="#1a2a1c" opacity="0.75"/><circle cx="67.7" cy="12.1" r="2.5" fill="#5a3a20" opacity="0.75"/><circle cx="110.7" cy="32.2" r="1.6" fill="#1a2a1c" opacity="0.75"/><circle cx="14.4" cy="25.3" r="2.3" fill="#c8442a" opacity="0.75"/><circle cx="35.7" cy="51.1" r="1.4" fill="#3c120c" opacity="0.75"/><circle cx="35.9" cy="28.3" r="2.9" fill="#7a2616" opacity="0.75"/><circle cx="92.4" cy="31.5" r="1.3" fill="#2a3a26" opacity="0.75"/><circle cx="84.8" cy="25.5" r="2.5" fill="#2f6a34" opacity="0.75"/><circle cx="126.2" cy="40.5" r="1.3" fill="#2a3a26" opacity="0.75"/><circle cx="45.6" cy="37.4" r="2.8" fill="#8e3420" opacity="0.75"/><circle cx="127.3" cy="-1.2" r="2.0" fill="#b08a3a" opacity="0.75"/><circle cx="49.8" cy="31.4" r="2.2" fill="#a03a20" opacity="0.75"/><circle cx="13.0" cy="12.2" r="1.8" fill="#c24a2a" opacity="0.75"/><circle cx="92.8" cy="24.0" r="1.9" fill="#c07a34" opacity="0.75"/><circle cx="100.5" cy="-1.2" r="2.2" fill="#3a7a3c" opacity="0.75"/><circle cx="129.1" cy="3.7" r="2.6" fill="#4a7a38" opacity="0.75"/><circle cx="32.3" cy="-2.3" r="1.6" fill="#d4552c" opacity="0.75"/><circle cx="68.5" cy="41.5" r="1.7" fill="#22321f" opacity="0.75"/><circle cx="42.1" cy="36.3" r="1.4" fill="#7a2616" opacity="0.75"/><circle cx="118.5" cy="19.7" r="2.2" fill="#3a7a3c" opacity="0.75"/><circle cx="15.6" cy="17.7" r="2.8" fill="#c8442a" opacity="0.75"/><circle cx="128.1" cy="13.3" r="1.3" fill="#285a2c" opacity="0.75"/><circle cx="124.8" cy="46.0" r="1.8" fill="#2a3a26" opacity="0.75"/><circle cx="95.8" cy="46.7" r="2.2" fill="#2a3a26" opacity="0.75"/><circle cx="117.5" cy="-0.6" r="2.4" fill="#285a2c" opacity="0.75"/><circle cx="86.6" cy="30.3" r="2.3" fill="#2a4a2a" opacity="0.75"/><circle cx="111.5" cy="11.0" r="1.3" fill="#b08a3a" opacity="0.75"/><circle cx="12.9" cy="3.4" r="2.1" fill="#b83a1f" opacity="0.75"/><circle cx="129.3" cy="37.4" r="1.4" fill="#22321f" opacity="0.75"/><circle cx="95.6" cy="41.5" r="2.1" fill="#2a3a26" opacity="0.75"/><circle cx="134.6" cy="6.4" r="2.7" fill="#3a7a3c" opacity="0.75"/><circle cx="9.0" cy="52.0" r="2.4" fill="#8e3420" opacity="0.75"/><circle cx="24.2" cy="49.4" r="1.0" fill="#a03a20" opacity="0.75"/><circle cx="118.3" cy="44.0" r="2.9" fill="#22321f" opacity="0.75"/><circle cx="10.7" cy="48.1" r="2.6" fill="#5a1c12" opacity="0.75"/><circle cx="26.4" cy="50.1" r="3.0" fill="#4a1a14" opacity="0.75"/><circle cx="131.8" cy="52.0" r="1.5" fill="#1a2a1c" opacity="0.75"/><circle cx="72.9" cy="42.3" r="2.0" fill="#1a2a1c" opacity="0.75"/><circle cx="91.7" cy="51.0" r="1.9" fill="#30402a" opacity="0.75"/><circle cx="112.9" cy="37.7" r="2.9" fill="#1a2a1c" opacity="0.75"/><circle cx="101.6" cy="22.9" r="2.1" fill="#5a6a30" opacity="0.75"/><circle cx="85.2" cy="27.8" r="2.7" fill="#4a7a38" opacity="0.75"/><circle cx="128.8" cy="48.3" r="2.2" fill="#22321f" opacity="0.75"/><circle cx="130.6" cy="27.9" r="2.1" fill="#5a6a30" opacity="0.75"/><circle cx="12.8" cy="-2.7" r="1.8" fill="#c8442a" opacity="0.75"/><circle cx="68.2" cy="20.6" r="2.6" fill="#5a3a20" opacity="0.75"/><circle cx="9.9" cy="6.8" r="2.9" fill="#b0402a" opacity="0.75"/><circle cx="124.4" cy="12.9" r="1.9" fill="#4a7a38" opacity="0.75"/><circle cx="121.3" cy="52.2" r="2.8" fill="#1a2a1c" opacity="0.75"/><circle cx="23.4" cy="33.5" r="2.9" fill="#5a1c12" opacity="0.75"/><circle cx="1.9" cy="6.2" r="1.0" fill="#c24a2a" opacity="0.75"/><circle cx="46.0" cy="33.6" r="1.2" fill="#5a1c12" opacity="0.75"/><circle cx="114.6" cy="33.8" r="2.4" fill="#4a7a38" opacity="0.75"/><circle cx="0.2" cy="34.3" r="2.7" fill="#4a1a14" opacity="0.75"/><circle cx="25.2" cy="34.2" r="2.3" fill="#4a1a14" opacity="0.75"/><circle cx="81.4" cy="47.5" r="1.5" fill="#22321f" opacity="0.75"/><circle cx="40.6" cy="15.6" r="2.8" fill="#d4552c" opacity="0.75"/><circle cx="119.5" cy="4.9" r="1.5" fill="#285a2c" opacity="0.75"/><circle cx="72.0" cy="38.6" r="1.4" fill="#1a2a1c" opacity="0.75"/><circle cx="24.7" cy="37.3" r="2.8" fill="#5a1c12" opacity="0.75"/><circle cx="94.3" cy="34.4" r="1.7" fill="#2a4a2a" opacity="0.75"/><circle cx="6.7" cy="3.3" r="1.1" fill="#a83218" opacity="0.75"/><circle cx="121.9" cy="25.4" r="1.4" fill="#3a7a3c" opacity="0.75"/><circle cx="10.1" cy="0.7" r="2.9" fill="#b0402a" opacity="0.75"/><circle cx="10.3" cy="20.1" r="1.9" fill="#d4552c" opacity="0.75"/><circle cx="79.9" cy="-2.2" r="2.4" fill="#b8652e" opacity="0.75"/><circle cx="124.2" cy="32.7" r="1.2" fill="#285a2c" opacity="0.75"/><circle cx="120.3" cy="44.3" r="2.4" fill="#18221a" opacity="0.75"/><circle cx="75.6" cy="8.3" r="2.2" fill="#7a4a24" opacity="0.75"/><circle cx="35.6" cy="3.9" r="2.5" fill="#d9633a" opacity="0.75"/><circle cx="15.4" cy="16.5" r="2.1" fill="#d9633a" opacity="0.75"/><circle cx="102.6" cy="20.9" r="2.4" fill="#285a2c" opacity="0.75"/><circle cx="133.7" cy="50.3" r="1.1" fill="#2a3a26" opacity="0.75"/><circle cx="43.6" cy="35.9" r="2.1" fill="#8e3420" opacity="0.75"/><circle cx="68.0" cy="26.4" r="1.4" fill="#5a6a30" opacity="0.75"/><circle cx="0.1" cy="33.3" r="2.5" fill="#8e3420" opacity="0.75"/><circle cx="66.7" cy="41.9" r="2.3" fill="#2a3a26" opacity="0.75"/><circle cx="122.0" cy="29.5" r="2.0" fill="#5a6a30" opacity="0.75"/><circle cx="113.8" cy="2.9" r="1.9" fill="#5a6a30" opacity="0.75"/><circle cx="79.5" cy="41.8" r="1.1" fill="#18221a" opacity="0.75"/><circle cx="130.9" cy="47.5" r="2.1" fill="#18221a" opacity="0.75"/><circle cx="127.4" cy="21.8" r="2.1" fill="#285a2c" opacity="0.75"/><circle cx="70.2" cy="25.5" r="1.5" fill="#8a5a2a" opacity="0.75"/><circle cx="95.9" cy="14.5" r="1.0" fill="#a8502a" opacity="0.75"/><circle cx="84.4" cy="21.1" r="2.4" fill="#4a7a38" opacity="0.75"/><circle cx="7.1" cy="50.4" r="1.9" fill="#7a2616" opacity="0.75"/><circle cx="3.3" cy="2.8" r="2.6" fill="#d4552c" opacity="0.75"/><circle cx="132.1" cy="45.2" r="2.2" fill="#30402a" opacity="0.75"/><circle cx="16.3" cy="21.6" r="2.2" fill="#c24a2a" opacity="0.75"/><circle cx="54.9" cy="42.9" r="2.1" fill="#3c120c" opacity="0.75"/><circle cx="98.3" cy="11.1" r="1.2" fill="#2a4a2a" opacity="0.75"/><circle cx="67.0" cy="46.9" r="1.5" fill="#30402a" opacity="0.75"/><circle cx="23.2" cy="13.4" r="1.5" fill="#a83218" opacity="0.75"/><circle cx="132.2" cy="51.0" r="2.8" fill="#1a2a1c" opacity="0.75"/><circle cx="-1.7" cy="12.3" r="1.1" fill="#d4552c" opacity="0.75"/><circle cx="71.7" cy="1.3" r="1.2" fill="#c07a34" opacity="0.75"/><circle cx="15.4" cy="48.3" r="2.6" fill="#4a1a14" opacity="0.75"/><circle cx="112.6" cy="42.4" r="1.9" fill="#18221a" opacity="0.75"/><circle cx="108.8" cy="18.8" r="2.3" fill="#285a2c" opacity="0.75"/><circle cx="37.1" cy="41.8" r="2.7" fill="#a03a20" opacity="0.75"/><circle cx="7.8" cy="1.9" r="2.1" fill="#c24a2a" opacity="0.75"/><circle cx="39.8" cy="50.7" r="2.2" fill="#8e3420" opacity="0.75"/><circle cx="97.0" cy="37.9" r="1.6" fill="#2a3a26" opacity="0.75"/><circle cx="123.0" cy="22.8" r="2.6" fill="#285a2c" opacity="0.75"/><circle cx="68.2" cy="2.0" r="2.7" fill="#8a5a2a" opacity="0.75"/><circle cx="74.8" cy="44.0" r="2.1" fill="#22321f" opacity="0.75"/><circle cx="9.4" cy="23.8" r="2.7" fill="#d4552c" opacity="0.75"/><circle cx="68.2" cy="29.1" r="2.1" fill="#8a5a2a" opacity="0.75"/><circle cx="113.2" cy="21.9" r="2.2" fill="#5a6a30" opacity="0.75"/><circle cx="8.6" cy="1.8" r="2.5" fill="#c8442a" opacity="0.75"/><circle cx="0.6" cy="35.6" r="1.2" fill="#d9633a" opacity="0.75"/><circle cx="30.9" cy="10.0" r="2.5" fill="#b0402a" opacity="0.75"/><circle cx="108.1" cy="1.3" r="2.2" fill="#2a4a2a" opacity="0.75"/><circle cx="111.0" cy="36.3" r="2.7" fill="#2a4a2a" opacity="0.75"/><circle cx="9.3" cy="24.4" r="2.1" fill="#3c120c" opacity="0.75"/><circle cx="95.0" cy="44.3" r="1.8" fill="#22321f" opacity="0.75"/><circle cx="133.8" cy="19.2" r="1.3" fill="#4a7a38" opacity="0.75"/><circle cx="70.0" cy="13.2" r="2.8" fill="#8a5a2a" opacity="0.75"/><circle cx="12.8" cy="35.2" r="2.6" fill="#5a1c12" opacity="0.75"/><circle cx="100.9" cy="-2.0" r="2.0" fill="#285a2c" opacity="0.75"/><circle cx="12.0" cy="7.9" r="1.4" fill="#c24a2a" opacity="0.75"/><circle cx="120.4" cy="20.7" r="2.8" fill="#b08a3a" opacity="0.75"/><circle cx="72.7" cy="45.2" r="2.0" fill="#2a3a26" opacity="0.75"/><circle cx="88.1" cy="42.5" r="1.2" fill="#22321f" opacity="0.75"/><circle cx="127.8" cy="44.3" r="1.8" fill="#30402a" opacity="0.75"/><circle cx="103.8" cy="43.5" r="1.1" fill="#1a2a1c" opacity="0.75"/><circle cx="117.6" cy="50.4" r="1.9" fill="#18221a" opacity="0.75"/><circle cx="80.6" cy="6.3" r="1.3" fill="#7a4a24" opacity="0.75"/><circle cx="122.3" cy="44.8" r="1.3" fill="#30402a" opacity="0.75"/><circle cx="33.8" cy="28.5" r="1.3" fill="#c8442a" opacity="0.75"/><circle cx="25.2" cy="51.1" r="1.3" fill="#3c120c" opacity="0.75"/><circle cx="34.2" cy="39.3" r="1.2" fill="#8e3420" opacity="0.75"/><circle cx="8.4" cy="41.2" r="2.1" fill="#5a1c12" opacity="0.75"/><circle cx="105.9" cy="21.6" r="2.8" fill="#2a4a2a" opacity="0.75"/><circle cx="40.6" cy="20.9" r="2.1" fill="#c24a2a" opacity="0.75"/><circle cx="95.7" cy="18.2" r="2.4" fill="#5a3a20" opacity="0.75"/><circle cx="90.3" cy="41.1" r="2.6" fill="#18221a" opacity="0.75"/><circle cx="95.2" cy="25.0" r="1.6" fill="#2a4a2a" opacity="0.75"/><circle cx="133.8" cy="44.2" r="1.4" fill="#2a3a26" opacity="0.75"/><circle cx="128.7" cy="41.5" r="2.1" fill="#22321f" opacity="0.75"/><circle cx="24.6" cy="40.2" r="1.7" fill="#4a1a14" opacity="0.75"/><circle cx="15.1" cy="34.2" r="1.4" fill="#5a1c12" opacity="0.75"/><circle cx="112.5" cy="32.0" r="1.2" fill="#22321f" opacity="0.75"/><circle cx="133.3" cy="22.6" r="2.5" fill="#2a4a2a" opacity="0.75"/><circle cx="102.8" cy="45.4" r="1.8" fill="#18221a" opacity="0.75"/><circle cx="83.0" cy="39.9" r="2.2" fill="#22321f" opacity="0.75"/><circle cx="88.1" cy="32.9" r="1.0" fill="#18221a" opacity="0.75"/><circle cx="11.7" cy="19.3" r="2.0" fill="#b0402a" opacity="0.75"/><circle cx="11.2" cy="39.1" r="1.5" fill="#3c120c" opacity="0.75"/><circle cx="72.7" cy="17.8" r="2.0" fill="#8a5a2a" opacity="0.75"/><circle cx="24.3" cy="52.1" r="3.0" fill="#7a2616" opacity="0.75"/><circle cx="75.3" cy="-1.4" r="2.3" fill="#b8652e" opacity="0.75"/><circle cx="30.8" cy="31.0" r="2.4" fill="#3c120c" opacity="0.75"/><circle cx="33.7" cy="49.1" r="1.9" fill="#7a2616" opacity="0.75"/><circle cx="121.8" cy="29.1" r="2.1" fill="#285a2c" opacity="0.75"/><circle cx="20.3" cy="41.0" r="2.8" fill="#7a2616" opacity="0.75"/><circle cx="13.9" cy="45.7" r="1.6" fill="#7a2616" opacity="0.75"/><circle cx="101.6" cy="18.4" r="1.3" fill="#2a4a2a" opacity="0.75"/><circle cx="7.5" cy="-1.1" r="1.4" fill="#c24a2a" opacity="0.75"/><circle cx="16.1" cy="41.6" r="2.7" fill="#4a1a14" opacity="0.75"/><circle cx="78.7" cy="44.4" r="1.0" fill="#22321f" opacity="0.75"/><circle cx="69.8" cy="4.0" r="1.8" fill="#b8652e" opacity="0.75"/><circle cx="33.4" cy="30.5" r="1.7" fill="#5a1c12" opacity="0.75"/><circle cx="96.6" cy="43.5" r="1.8" fill="#2a3a26" opacity="0.75"/><circle cx="53.8" cy="33.8" r="2.4" fill="#3c120c" opacity="0.75"/><circle cx="115.0" cy="21.1" r="1.9" fill="#5a6a30" opacity="0.75"/><circle cx="42.6" cy="27.7" r="1.8" fill="#5a1c12" opacity="0.75"/><circle cx="37.9" cy="33.4" r="1.9" fill="#3c120c" opacity="0.75"/><circle cx="100.8" cy="15.0" r="2.2" fill="#2f6a34" opacity="0.75"/><circle cx="113.5" cy="11.3" r="2.7" fill="#4a7a38" opacity="0.75"/><circle cx="92.9" cy="28.0" r="1.5" fill="#3a7a3c" opacity="0.75"/><circle cx="117.3" cy="18.8" r="2.1" fill="#3a7a3c" opacity="0.75"/><circle cx="27.6" cy="41.1" r="2.1" fill="#5a1c12" opacity="0.75"/><circle cx="68.7" cy="4.7" r="2.8" fill="#5a3a20" opacity="0.75"/><circle cx="-2.9" cy="11.4" r="1.6" fill="#c8442a" opacity="0.75"/><circle cx="16.5" cy="37.8" r="1.5" fill="#8e3420" opacity="0.75"/><circle cx="121.0" cy="15.2" r="2.0" fill="#2a4a2a" opacity="0.75"/><circle cx="124.3" cy="49.9" r="1.4" fill="#2a3a26" opacity="0.75"/><circle cx="121.1" cy="-2.1" r="2.3" fill="#5a6a30" opacity="0.75"/><circle cx="24.9" cy="34.3" r="1.4" fill="#c8442a" opacity="0.75"/><circle cx="86.7" cy="15.1" r="2.6" fill="#7a4a24" opacity="0.75"/><circle cx="117.0" cy="39.1" r="1.3" fill="#18221a" opacity="0.75"/><circle cx="13.7" cy="37.8" r="1.5" fill="#4a1a14" opacity="0.75"/><circle cx="88.7" cy="43.6" r="1.7" fill="#30402a" opacity="0.75"/><circle cx="21.9" cy="10.3" r="1.3" fill="#d9633a" opacity="0.75"/><circle cx="132.7" cy="23.0" r="2.1" fill="#2f6a34" opacity="0.75"/><circle cx="-2.0" cy="31.6" r="2.1" fill="#4a1a14" opacity="0.75"/><circle cx="9.0" cy="13.8" r="2.5" fill="#b83a1f" opacity="0.75"/><circle cx="98.3" cy="-1.3" r="2.6" fill="#2f6a34" opacity="0.75"/><circle cx="-2.6" cy="49.6" r="1.1" fill="#a03a20" opacity="0.75"/><circle cx="122.5" cy="15.9" r="2.0" fill="#285a2c" opacity="0.75"/><circle cx="66.8" cy="46.9" r="2.4" fill="#22321f" opacity="0.75"/><circle cx="79.0" cy="42.5" r="1.2" fill="#30402a" opacity="0.75"/><circle cx="103.7" cy="43.4" r="2.6" fill="#18221a" opacity="0.75"/><circle cx="72.1" cy="47.3" r="2.2" fill="#1a2a1c" opacity="0.75"/><circle cx="76.0" cy="48.5" r="1.4" fill="#18221a" opacity="0.75"/><circle cx="108.3" cy="26.7" r="2.4" fill="#2f6a34" opacity="0.75"/><circle cx="7.0" cy="50.5" r="2.1" fill="#a03a20" opacity="0.75"/><circle cx="29.8" cy="5.6" r="1.6" fill="#b83a1f" opacity="0.75"/><circle cx="110.1" cy="40.6" r="2.6" fill="#18221a" opacity="0.75"/><circle cx="9.2" cy="45.4" r="1.3" fill="#7a2616" opacity="0.75"/><circle cx="65.6" cy="35.9" r="2.2" fill="#18221a" opacity="0.75"/><circle cx="2.8" cy="25.9" r="2.5" fill="#d4552c" opacity="0.75"/><circle cx="99.8" cy="27.8" r="3.0" fill="#4a7a38" opacity="0.75"/><circle cx="119.8" cy="5.4" r="1.8" fill="#4a7a38" opacity="0.75"/><circle cx="37.8" cy="4.0" r="2.7" fill="#c8442a" opacity="0.75"/><circle cx="125.7" cy="18.5" r="1.7" fill="#5a6a30" opacity="0.75"/><circle cx="27.1" cy="6.5" r="2.2" fill="#c24a2a" opacity="0.75"/><circle cx="44.4" cy="38.0" r="2.7" fill="#7a2616" opacity="0.75"/><circle cx="49.6" cy="43.1" r="1.4" fill="#7a2616" opacity="0.75"/><circle cx="106.5" cy="44.4" r="2.0" fill="#30402a" opacity="0.75"/><circle cx="134.1" cy="37.1" r="2.7" fill="#18221a" opacity="0.75"/><circle cx="127.9" cy="33.6" r="2.0" fill="#5a6a30" opacity="0.75"/><circle cx="34.1" cy="18.3" r="1.3" fill="#b83a1f" opacity="0.75"/><circle cx="15.9" cy="11.2" r="2.7" fill="#b83a1f" opacity="0.75"/><circle cx="112.8" cy="23.5" r="2.7" fill="#285a2c" opacity="0.75"/><circle cx="103.4" cy="27.6" r="1.1" fill="#3a7a3c" opacity="0.75"/><circle cx="14.6" cy="9.3" r="1.8" fill="#c24a2a" opacity="0.75"/><circle cx="15.8" cy="38.7" r="1.5" fill="#a03a20" opacity="0.75"/><circle cx="49.0" cy="48.9" r="2.7" fill="#8e3420" opacity="0.75"/><circle cx="28.2" cy="14.2" r="1.7" fill="#c8442a" opacity="0.75"/><circle cx="114.1" cy="41.1" r="2.0" fill="#2a3a26" opacity="0.75"/><circle cx="88.1" cy="0.9" r="2.7" fill="#7a4a24" opacity="0.75"/><circle cx="29.4" cy="34.3" r="1.2" fill="#8e3420" opacity="0.75"/><circle cx="65.0" cy="25.9" r="2.9" fill="#3a7a3c" opacity="0.75"/><circle cx="18.9" cy="20.7" r="2.0" fill="#c24a2a" opacity="0.75"/><circle cx="95.3" cy="27.7" r="2.5" fill="#b8652e" opacity="0.75"/><circle cx="39.6" cy="51.0" r="2.8" fill="#5a1c12" opacity="0.75"/><circle cx="122.9" cy="13.0" r="1.8" fill="#285a2c" opacity="0.75"/><circle cx="0.2" cy="17.5" r="2.8" fill="#b83a1f" opacity="0.75"/><circle cx="109.5" cy="49.3" r="2.3" fill="#2a3a26" opacity="0.75"/><circle cx="128.7" cy="18.4" r="2.2" fill="#2a4a2a" opacity="0.75"/><circle cx="7.4" cy="-0.2" r="2.1" fill="#c8442a" opacity="0.75"/><circle cx="35.1" cy="45.9" r="2.8" fill="#8e3420" opacity="0.75"/><circle cx="2.3" cy="5.0" r="2.0" fill="#b83a1f" opacity="0.75"/><circle cx="34.2" cy="12.2" r="1.4" fill="#a83218" opacity="0.75"/><circle cx="132.2" cy="-2.8" r="2.1" fill="#2a4a2a" opacity="0.75"/><circle cx="72.6" cy="33.8" r="2.1" fill="#285a2c" opacity="0.75"/><circle cx="33.4" cy="3.1" r="1.0" fill="#d4552c" opacity="0.75"/><circle cx="93.0" cy="37.5" r="2.9" fill="#30402a" opacity="0.75"/><circle cx="92.1" cy="44.5" r="1.6" fill="#30402a" opacity="0.75"/><circle cx="65.8" cy="35.1" r="1.7" fill="#b08a3a" opacity="0.75"/><circle cx="14.4" cy="0.7" r="1.1" fill="#c24a2a" opacity="0.75"/><circle cx="39.8" cy="47.1" r="2.0" fill="#5a1c12" opacity="0.75"/><circle cx="19.4" cy="48.1" r="2.7" fill="#3c120c" opacity="0.75"/><circle cx="51.8" cy="40.6" r="2.4" fill="#a03a20" opacity="0.75"/><circle cx="31.8" cy="39.2" r="1.7" fill="#7a2616" opacity="0.75"/><circle cx="113.3" cy="45.9" r="2.1" fill="#22321f" opacity="0.75"/><circle cx="83.0" cy="46.0" r="2.6" fill="#2a3a26" opacity="0.75"/><circle cx="28.9" cy="7.9" r="1.0" fill="#b0402a" opacity="0.75"/><circle cx="130.9" cy="4.9" r="2.4" fill="#b08a3a" opacity="0.75"/><circle cx="88.9" cy="19.8" r="2.4" fill="#2f6a34" opacity="0.75"/><circle cx="117.2" cy="8.4" r="1.7" fill="#2a4a2a" opacity="0.75"/><circle cx="13.6" cy="16.5" r="1.1" fill="#d9633a" opacity="0.75"/><circle cx="20.6" cy="1.0" r="1.9" fill="#c24a2a" opacity="0.75"/><circle cx="36.2" cy="20.1" r="2.2" fill="#a83218" opacity="0.75"/><circle cx="50.7" cy="37.9" r="2.1" fill="#7a2616" opacity="0.75"/><circle cx="58.0" cy="46.2" r="2.1" fill="#8e3420" opacity="0.75"/><circle cx="34.3" cy="30.6" r="1.5" fill="#3c120c" opacity="0.75"/><circle cx="28.4" cy="25.4" r="1.7" fill="#5a1c12" opacity="0.75"/><circle cx="17.9" cy="-2.6" r="2.5" fill="#c8442a" opacity="0.75"/><circle cx="22.2" cy="25.5" r="3.0" fill="#8e3420" opacity="0.75"/><circle cx="87.7" cy="33.8" r="1.6" fill="#2a4a2a" opacity="0.75"/><circle cx="58.2" cy="46.2" r="2.4" fill="#5a1c12" opacity="0.75"/><circle cx="127.4" cy="28.8" r="2.3" fill="#2f6a34" opacity="0.75"/><circle cx="101.0" cy="15.3" r="2.0" fill="#3a7a3c" opacity="0.75"/><circle cx="5.8" cy="18.5" r="2.5" fill="#d4552c" opacity="0.75"/><circle cx="106.3" cy="40.4" r="1.8" fill="#1a2a1c" opacity="0.75"/><circle cx="126.2" cy="25.4" r="2.7" fill="#5a6a30" opacity="0.75"/><circle cx="0.2" cy="31.0" r="1.5" fill="#3c120c" opacity="0.75"/><circle cx="66.9" cy="13.3" r="3.0" fill="#5a3a20" opacity="0.75"/><circle cx="99.3" cy="9.5" r="2.5" fill="#b08a3a" opacity="0.75"/><circle cx="25.4" cy="17.5" r="1.3" fill="#d4552c" opacity="0.75"/><circle cx="128.4" cy="9.1" r="2.8" fill="#2a4a2a" opacity="0.75"/><circle cx="78.3" cy="31.1" r="1.6" fill="#4a7a38" opacity="0.75"/><circle cx="53.3" cy="38.7" r="1.4" fill="#a03a20" opacity="0.75"/><circle cx="104.3" cy="28.0" r="1.0" fill="#b08a3a" opacity="0.75"/><circle cx="49.2" cy="35.0" r="1.4" fill="#8e3420" opacity="0.75"/><circle cx="115.2" cy="34.1" r="2.0" fill="#2f6a34" opacity="0.75"/><circle cx="13.8" cy="40.6" r="2.5" fill="#8e3420" opacity="0.75"/><circle cx="79.9" cy="30.8" r="2.0" fill="#4a7a38" opacity="0.75"/><circle cx="41.8" cy="28.7" r="1.7" fill="#4a1a14" opacity="0.75"/><circle cx="40.2" cy="40.5" r="3.0" fill="#7a2616" opacity="0.75"/><circle cx="100.9" cy="49.9" r="1.2" fill="#22321f" opacity="0.75"/><circle cx="111.4" cy="44.1" r="2.0" fill="#1a2a1c" opacity="0.75"/><circle cx="22.5" cy="-0.7" r="1.7" fill="#b83a1f" opacity="0.75"/><circle cx="24.0" cy="13.5" r="2.3" fill="#a83218" opacity="0.75"/><circle cx="57.8" cy="41.7" r="2.8" fill="#8e3420" opacity="0.75"/><circle cx="115.0" cy="42.5" r="2.1" fill="#22321f" opacity="0.75"/><circle cx="109.0" cy="7.5" r="1.7" fill="#2a4a2a" opacity="0.75"/><circle cx="27.3" cy="14.0" r="1.8" fill="#c8442a" opacity="0.75"/><circle cx="114.2" cy="33.4" r="2.8" fill="#22321f" opacity="0.75"/><circle cx="70.4" cy="15.7" r="2.9" fill="#c07a34" opacity="0.75"/><circle cx="89.2" cy="22.4" r="1.0" fill="#b08a3a" opacity="0.75"/><circle cx="127.5" cy="35.8" r="1.4" fill="#22321f" opacity="0.75"/><circle cx="20.7" cy="31.3" r="1.1" fill="#3c120c" opacity="0.75"/><circle cx="126.9" cy="33.0" r="1.7" fill="#1a2a1c" opacity="0.75"/><circle cx="92.4" cy="40.4" r="1.7" fill="#22321f" opacity="0.75"/><circle cx="6.9" cy="12.7" r="1.7" fill="#b83a1f" opacity="0.75"/><circle cx="44.8" cy="38.5" r="1.5" fill="#3c120c" opacity="0.75"/><circle cx="14.0" cy="48.7" r="2.9" fill="#a03a20" opacity="0.75"/><circle cx="99.6" cy="32.5" r="1.9" fill="#18221a" opacity="0.75"/><circle cx="43.0" cy="31.5" r="2.3" fill="#a03a20" opacity="0.75"/><circle cx="92.9" cy="36.7" r="1.5" fill="#2a3a26" opacity="0.75"/><circle cx="118.5" cy="42.4" r="1.2" fill="#18221a" opacity="0.75"/><circle cx="120.7" cy="2.2" r="1.7" fill="#b08a3a" opacity="0.75"/><circle cx="78.5" cy="38.1" r="3.0" fill="#b08a3a" opacity="0.75"/><circle cx="84.4" cy="24.7" r="1.7" fill="#b08a3a" opacity="0.75"/><circle cx="87.0" cy="0.6" r="1.4" fill="#5a3a20" opacity="0.75"/><circle cx="12.2" cy="0.4" r="3.0" fill="#b0402a" opacity="0.75"/><circle cx="87.5" cy="9.9" r="3.0" fill="#7a4a24" opacity="0.75"/><circle cx="111.6" cy="27.4" r="1.2" fill="#2f6a34" opacity="0.75"/><circle cx="20.0" cy="35.3" r="2.2" fill="#3c120c" opacity="0.75"/><circle cx="119.0" cy="22.6" r="1.3" fill="#285a2c" opacity="0.75"/><circle cx="127.3" cy="49.9" r="1.0" fill="#30402a" opacity="0.75"/><circle cx="6.3" cy="11.0" r="2.3" fill="#b83a1f" opacity="0.75"/><circle cx="37.6" cy="42.9" r="1.5" fill="#5a1c12" opacity="0.75"/><circle cx="133.6" cy="31.7" r="1.3" fill="#22321f" opacity="0.75"/><circle cx="114.4" cy="3.2" r="2.7" fill="#5a6a30" opacity="0.75"/><circle cx="69.4" cy="21.0" r="2.2" fill="#a8502a" opacity="0.75"/><circle cx="109.9" cy="40.3" r="2.4" fill="#30402a" opacity="0.75"/><circle cx="82.4" cy="20.9" r="2.0" fill="#c07a34" opacity="0.75"/><circle cx="85.7" cy="47.0" r="1.1" fill="#2a3a26" opacity="0.75"/><circle cx="71.1" cy="35.8" r="1.8" fill="#30402a" opacity="0.75"/><circle cx="127.6" cy="30.5" r="2.0" fill="#4a7a38" opacity="0.75"/><circle cx="83.3" cy="12.8" r="2.2" fill="#a8502a" opacity="0.75"/><circle cx="112.3" cy="0.6" r="2.1" fill="#4a7a38" opacity="0.75"/><circle cx="110.0" cy="36.8" r="2.4" fill="#2a3a26" opacity="0.75"/><circle cx="130.3" cy="-2.6" r="2.2" fill="#285a2c" opacity="0.75"/><circle cx="129.9" cy="37.9" r="2.7" fill="#30402a" opacity="0.75"/><circle cx="4.7" cy="7.8" r="1.2" fill="#b83a1f" opacity="0.75"/><circle cx="4.3" cy="2.5" r="1.5" fill="#b0402a" opacity="0.75"/><circle cx="127.2" cy="35.2" r="1.7" fill="#30402a" opacity="0.75"/><circle cx="90.8" cy="2.0" r="3.0" fill="#7a4a24" opacity="0.75"/><circle cx="1.5" cy="5.8" r="1.3" fill="#b83a1f" opacity="0.75"/><circle cx="4.8" cy="42.1" r="1.1" fill="#4a1a14" opacity="0.75"/><circle cx="16.1" cy="17.1" r="2.4" fill="#c24a2a" opacity="0.75"/><circle cx="100.9" cy="31.2" r="1.0" fill="#4a7a38" opacity="0.75"/><circle cx="43.3" cy="33.9" r="2.8" fill="#7a2616" opacity="0.75"/><circle cx="104.8" cy="23.0" r="2.5" fill="#4a7a38" opacity="0.75"/><circle cx="90.5" cy="44.3" r="1.9" fill="#1a2a1c" opacity="0.75"/><circle cx="129.0" cy="18.0" r="2.7" fill="#b08a3a" opacity="0.75"/><circle cx="13.3" cy="15.3" r="2.9" fill="#b0402a" opacity="0.75"/><circle cx="26.1" cy="21.5" r="2.1" fill="#c8442a" opacity="0.75"/><circle cx="18.4" cy="13.2" r="1.8" fill="#d9633a" opacity="0.75"/><circle cx="24.6" cy="38.5" r="2.0" fill="#8e3420" opacity="0.75"/><circle cx="67.6" cy="25.4" r="2.1" fill="#c07a34" opacity="0.75"/><circle cx="86.9" cy="19.2" r="2.6" fill="#5a3a20" opacity="0.75"/><circle cx="76.2" cy="46.7" r="1.7" fill="#18221a" opacity="0.75"/><circle cx="42.3" cy="38.1" r="1.5" fill="#a03a20" opacity="0.75"/><circle cx="107.8" cy="12.0" r="1.5" fill="#5a6a30" opacity="0.75"/><circle cx="6.0" cy="7.6" r="1.8" fill="#d9633a" opacity="0.75"/><circle cx="11.1" cy="15.1" r="2.7" fill="#c24a2a" opacity="0.75"/><circle cx="64.6" cy="23.4" r="2.9" fill="#3a7a3c" opacity="0.75"/><circle cx="105.2" cy="9.9" r="1.4" fill="#5a6a30" opacity="0.75"/><circle cx="108.4" cy="32.9" r="2.7" fill="#2f6a34" opacity="0.75"/><circle cx="31.4" cy="-1.8" r="2.1" fill="#b83a1f" opacity="0.75"/><circle cx="36.5" cy="30.1" r="1.5" fill="#5a1c12" opacity="0.75"/><circle cx="36.3" cy="13.4" r="2.0" fill="#d4552c" opacity="0.75"/><circle cx="110.4" cy="29.1" r="1.3" fill="#22321f" opacity="0.75"/><circle cx="70.8" cy="35.9" r="2.8" fill="#1a2a1c" opacity="0.75"/><circle cx="55.9" cy="43.0" r="2.3" fill="#8e3420" opacity="0.75"/><circle cx="127.2" cy="26.8" r="2.1" fill="#3a7a3c" opacity="0.75"/><circle cx="7.4" cy="29.4" r="2.1" fill="#c24a2a" opacity="0.75"/><circle cx="6.9" cy="50.2" r="1.2" fill="#5a1c12" opacity="0.75"/><circle cx="24.0" cy="18.7" r="1.7" fill="#c24a2a" opacity="0.75"/><circle cx="88.7" cy="5.3" r="1.8" fill="#8a5a2a" opacity="0.75"/><circle cx="71.8" cy="22.8" r="2.4" fill="#5a6a30" opacity="0.75"/><circle cx="65.9" cy="8.7" r="2.4" fill="#5a3a20" opacity="0.75"/><circle cx="23.6" cy="37.9" r="1.1" fill="#4a1a14" opacity="0.75"/><circle cx="9.3" cy="50.1" r="1.5" fill="#3c120c" opacity="0.75"/><circle cx="124.7" cy="47.7" r="2.9" fill="#18221a" opacity="0.75"/><circle cx="121.0" cy="15.7" r="1.3" fill="#3a7a3c" opacity="0.75"/><circle cx="129.4" cy="-1.1" r="1.2" fill="#2f6a34" opacity="0.75"/><circle cx="80.4" cy="46.9" r="2.5" fill="#2a3a26" opacity="0.75"/><circle cx="6.4" cy="43.9" r="3.0" fill="#8e3420" opacity="0.75"/><circle cx="121.0" cy="11.3" r="1.1" fill="#b08a3a" opacity="0.75"/><circle cx="43.3" cy="36.8" r="1.9" fill="#8e3420" opacity="0.75"/><circle cx="21.2" cy="5.8" r="1.5" fill="#b0402a" opacity="0.75"/><circle cx="123.8" cy="7.9" r="2.4" fill="#5a6a30" opacity="0.75"/><circle cx="69.1" cy="12.0" r="2.8" fill="#b8652e" opacity="0.75"/><circle cx="6.1" cy="27.1" r="2.5" fill="#5a1c12" opacity="0.75"/><circle cx="106.1" cy="28.9" r="1.2" fill="#3a7a3c" opacity="0.75"/><circle cx="16.1" cy="36.5" r="1.1" fill="#8e3420" opacity="0.75"/><circle cx="135.0" cy="21.7" r="2.3" fill="#2a4a2a" opacity="0.75"/><circle cx="25.6" cy="50.5" r="2.1" fill="#5a1c12" opacity="0.75"/><circle cx="65.9" cy="19.4" r="1.1" fill="#b8652e" opacity="0.75"/><circle cx="6.3" cy="6.4" r="2.0" fill="#b83a1f" opacity="0.75"/><circle cx="15.7" cy="37.0" r="2.8" fill="#a03a20" opacity="0.75"/><circle cx="22.5" cy="17.5" r="1.1" fill="#d4552c" opacity="0.75"/><circle cx="77.4" cy="13.2" r="2.0" fill="#5a3a20" opacity="0.75"/><circle cx="102.2" cy="28.1" r="2.9" fill="#3a7a3c" opacity="0.75"/><circle cx="-0.7" cy="51.4" r="3.0" fill="#a03a20" opacity="0.75"/><circle cx="66.5" cy="6.5" r="1.7" fill="#7a4a24" opacity="0.75"/><circle cx="63.7" cy="49.7" r="2.2" fill="#18221a" opacity="0.75"/><circle cx="132.0" cy="-1.6" r="2.5" fill="#2f6a34" opacity="0.75"/><circle cx="35.9" cy="-0.3" r="1.8" fill="#c8442a" opacity="0.75"/><circle cx="0.3" cy="22.0" r="2.9" fill="#c8442a" opacity="0.75"/><circle cx="82.4" cy="18.8" r="1.9" fill="#7a4a24" opacity="0.75"/><circle cx="20.0" cy="5.5" r="2.2" fill="#d9633a" opacity="0.75"/><circle cx="71.5" cy="24.2" r="1.7" fill="#b8652e" opacity="0.75"/><circle cx="90.5" cy="33.7" r="2.8" fill="#30402a" opacity="0.75"/><circle cx="132.9" cy="14.0" r="1.3" fill="#3a7a3c" opacity="0.75"/><circle cx="73.6" cy="20.8" r="2.4" fill="#8a5a2a" opacity="0.75"/><circle cx="10.4" cy="37.6" r="1.7" fill="#8e3420" opacity="0.75"/><circle cx="99.8" cy="44.2" r="2.3" fill="#18221a" opacity="0.75"/><circle cx="75.5" cy="0.3" r="1.6" fill="#a8502a" opacity="0.75"/><circle cx="29.4" cy="45.9" r="2.6" fill="#a03a20" opacity="0.75"/><circle cx="66.5" cy="22.1" r="2.1" fill="#5a3a20" opacity="0.75"/><circle cx="115.6" cy="5.9" r="1.6" fill="#5a6a30" opacity="0.75"/><circle cx="112.1" cy="44.4" r="3.0" fill="#22321f" opacity="0.75"/><circle cx="107.0" cy="39.0" r="2.6" fill="#22321f" opacity="0.75"/><circle cx="13.2" cy="25.1" r="2.4" fill="#5a1c12" opacity="0.75"/><circle cx="129.0" cy="35.8" r="1.9" fill="#18221a" opacity="0.75"/><circle cx="125.7" cy="35.0" r="1.1" fill="#2f6a34" opacity="0.75"/><circle cx="32.8" cy="14.0" r="1.8" fill="#a83218" opacity="0.75"/><circle cx="92.8" cy="41.7" r="3.0" fill="#1a2a1c" opacity="0.75"/><circle cx="100.8" cy="-2.9" r="1.5" fill="#4a7a38" opacity="0.75"/><circle cx="28.0" cy="39.0" r="1.1" fill="#8e3420" opacity="0.75"/><circle cx="106.8" cy="10.5" r="2.3" fill="#b08a3a" opacity="0.75"/><circle cx="18.2" cy="22.4" r="1.9" fill="#c8442a" opacity="0.75"/><circle cx="86.4" cy="37.5" r="2.9" fill="#2f6a34" opacity="0.75"/><circle cx="129.8" cy="42.7" r="1.7" fill="#30402a" opacity="0.75"/><circle cx="133.9" cy="0.9" r="1.2" fill="#2f6a34" opacity="0.75"/><circle cx="24.5" cy="31.3" r="1.5" fill="#5a1c12" opacity="0.75"/><circle cx="115.7" cy="47.5" r="2.1" fill="#22321f" opacity="0.75"/><circle cx="106.0" cy="51.1" r="1.2" fill="#18221a" opacity="0.75"/><circle cx="91.6" cy="42.0" r="2.1" fill="#2a3a26" opacity="0.75"/><circle cx="77.9" cy="21.8" r="1.0" fill="#2f6a34" opacity="0.75"/><circle cx="81.9" cy="7.8" r="2.9" fill="#c07a34" opacity="0.75"/><circle cx="97.3" cy="15.8" r="2.5" fill="#8a5a2a" opacity="0.75"/><circle cx="5.0" cy="0.6" r="3.0" fill="#d4552c" opacity="0.75"/><circle cx="128.7" cy="49.4" r="1.1" fill="#2a3a26" opacity="0.75"/><circle cx="134.3" cy="26.4" r="2.6" fill="#2a4a2a" opacity="0.75"/><circle cx="86.7" cy="37.2" r="2.2" fill="#22321f" opacity="0.75"/><circle cx="30.8" cy="30.6" r="1.8" fill="#a03a20" opacity="0.75"/><circle cx="128.6" cy="47.3" r="2.0" fill="#2a3a26" opacity="0.75"/><circle cx="124.8" cy="34.6" r="1.7" fill="#30402a" opacity="0.75"/><circle cx="76.6" cy="40.6" r="2.7" fill="#1a2a1c" opacity="0.75"/><circle cx="94.7" cy="23.5" r="1.7" fill="#285a2c" opacity="0.75"/><circle cx="26.1" cy="-1.6" r="2.7" fill="#c8442a" opacity="0.75"/><circle cx="131.7" cy="43.4" r="1.8" fill="#22321f" opacity="0.75"/><circle cx="37.9" cy="39.7" r="2.9" fill="#a03a20" opacity="0.75"/><circle cx="79.9" cy="2.0" r="2.2" fill="#c07a34" opacity="0.75"/><circle cx="95.2" cy="-2.0" r="1.8" fill="#7a4a24" opacity="0.75"/><circle cx="9.5" cy="19.4" r="2.7" fill="#d4552c" opacity="0.75"/><circle cx="100.1" cy="22.6" r="2.0" fill="#3a7a3c" opacity="0.75"/><circle cx="112.6" cy="20.1" r="2.2" fill="#2a4a2a" opacity="0.75"/><circle cx="43.9" cy="18.5" r="2.0" fill="#c24a2a" opacity="0.75"/><circle cx="74.5" cy="29.1" r="3.0" fill="#285a2c" opacity="0.75"/><circle cx="108.7" cy="27.0" r="1.0" fill="#285a2c" opacity="0.75"/><circle cx="69.9" cy="26.2" r="1.3" fill="#b08a3a" opacity="0.75"/><circle cx="90.3" cy="2.8" r="1.1" fill="#c07a34" opacity="0.75"/><circle cx="133.8" cy="30.6" r="2.9" fill="#2a4a2a" opacity="0.75"/><circle cx="4.2" cy="-2.5" r="2.1" fill="#b83a1f" opacity="0.75"/><circle cx="111.3" cy="19.4" r="1.5" fill="#5a6a30" opacity="0.75"/><circle cx="67.9" cy="28.8" r="1.8" fill="#b08a3a" opacity="0.75"/><circle cx="117.4" cy="52.1" r="1.5" fill="#1a2a1c" opacity="0.75"/><circle cx="122.7" cy="34.6" r="1.1" fill="#1a2a1c" opacity="0.75"/><circle cx="64.5" cy="38.0" r="1.1" fill="#3a7a3c" opacity="0.75"/><circle cx="83.2" cy="18.4" r="1.6" fill="#b8652e" opacity="0.75"/><circle cx="113.7" cy="38.4" r="1.1" fill="#2a4a2a" opacity="0.75"/><circle cx="75.7" cy="32.9" r="3.0" fill="#30402a" opacity="0.75"/><circle cx="41.1" cy="35.2" r="2.8" fill="#8e3420" opacity="0.75"/><circle cx="21.2" cy="7.8" r="2.2" fill="#d9633a" opacity="0.75"/><circle cx="46.0" cy="38.7" r="1.4" fill="#7a2616" opacity="0.75"/><circle cx="89.3" cy="47.2" r="2.5" fill="#30402a" opacity="0.75"/><circle cx="0.4" cy="16.1" r="2.2" fill="#d9633a" opacity="0.75"/><circle cx="79.8" cy="47.9" r="1.1" fill="#30402a" opacity="0.75"/><circle cx="21.3" cy="13.1" r="2.3" fill="#b83a1f" opacity="0.75"/><circle cx="4.4" cy="43.0" r="1.4" fill="#7a2616" opacity="0.75"/><circle cx="33.0" cy="-2.0" r="1.6" fill="#b83a1f" opacity="0.75"/><circle cx="20.9" cy="6.6" r="1.2" fill="#d4552c" opacity="0.75"/><circle cx="40.0" cy="49.3" r="2.5" fill="#a03a20" opacity="0.75"/><circle cx="109.7" cy="18.4" r="1.5" fill="#5a6a30" opacity="0.75"/><circle cx="70.6" cy="43.5" r="2.8" fill="#2a3a26" opacity="0.75"/><circle cx="51.0" cy="35.2" r="1.1" fill="#4a1a14" opacity="0.75"/><circle cx="23.4" cy="48.2" r="2.7" fill="#a03a20" opacity="0.75"/><circle cx="66.2" cy="10.4" r="2.2" fill="#b8652e" opacity="0.75"/><circle cx="7.3" cy="11.6" r="2.9" fill="#a83218" opacity="0.75"/><circle cx="73.7" cy="-0.7" r="1.6" fill="#a8502a" opacity="0.75"/><circle cx="70.4" cy="3.6" r="2.7" fill="#8a5a2a" opacity="0.75"/><circle cx="85.3" cy="3.5" r="2.1" fill="#5a3a20" opacity="0.75"/><circle cx="78.6" cy="29.3" r="1.1" fill="#22321f" opacity="0.75"/><circle cx="90.0" cy="9.8" r="1.9" fill="#7a4a24" opacity="0.75"/><circle cx="133.6" cy="51.4" r="2.2" fill="#22321f" opacity="0.75"/><circle cx="80.4" cy="11.3" r="1.6" fill="#c07a34" opacity="0.75"/><circle cx="23.0" cy="44.0" r="1.4" fill="#3c120c" opacity="0.75"/><circle cx="1.7" cy="44.1" r="1.3" fill="#5a1c12" opacity="0.75"/><circle cx="99.1" cy="49.3" r="2.3" fill="#2a3a26" opacity="0.75"/><circle cx="121.4" cy="40.8" r="1.6" fill="#1a2a1c" opacity="0.75"/><circle cx="126.1" cy="-0.4" r="2.1" fill="#2a4a2a" opacity="0.75"/><circle cx="87.6" cy="19.9" r="2.3" fill="#8a5a2a" opacity="0.75"/><circle cx="130.6" cy="11.2" r="1.6" fill="#b08a3a" opacity="0.75"/><circle cx="8.4" cy="11.9" r="2.4" fill="#b0402a" opacity="0.75"/><circle cx="88.8" cy="4.1" r="2.3" fill="#8a5a2a" opacity="0.75"/><circle cx="49.9" cy="39.3" r="2.0" fill="#8e3420" opacity="0.75"/><circle cx="78.2" cy="4.2" r="1.5" fill="#7a4a24" opacity="0.75"/><circle cx="132.6" cy="18.9" r="1.7" fill="#5a6a30" opacity="0.75"/><circle cx="85.8" cy="32.9" r="1.4" fill="#b08a3a" opacity="0.75"/><circle cx="75.0" cy="11.1" r="1.4" fill="#a8502a" opacity="0.75"/><circle cx="117.8" cy="17.7" r="1.1" fill="#5a6a30" opacity="0.75"/><circle cx="2.2" cy="-1.3" r="2.8" fill="#c8442a" opacity="0.75"/><circle cx="95.4" cy="5.2" r="1.7" fill="#a8502a" opacity="0.75"/><circle cx="78.8" cy="10.6" r="1.4" fill="#5a3a20" opacity="0.75"/>
<path d="M3 24L5 55M12 22L13 54M21 27L22 52M30 31L30.5 50M40 35L40 49M49 38L49.5 48" stroke="#2a0e08" stroke-width="1.1" opacity="0.75"/>
<path d="M124 44L132 40V50L123 51Z" fill="#c8923a"/>
</g>
<path d="M-2 61L63 48.5L132 53V90H-2Z" fill="url(#road)" filter="url(#bl2)"/>
<path d="M-2 55L62 48L-2 62Z" fill="#7a4a3e" opacity="0.8" filter="url(#bl2)"/>
<path d="M62 48.5L132 53V56L64 49Z" fill="#4a3a30" opacity="0.6"/>
<path d="M10 75L50 58L40 85Z" fill="#7a828c" opacity="0.25" filter="url(#bl)"/>
<g filter="url(#bl2)">
<path d="M63.6 49.5L65.2 49.5L68.6 88H59.6Z" fill="#dcb955"/>
<path d="M66.2 49.5L67.6 49.5L84 88H73Z" fill="#dcb955"/>
</g>
<g filter="url(#bl3)"><ellipse cx="84.5" cy="59.2" rx="0.5" ry="0.6" fill="#b08060" opacity="0.65"/><ellipse cx="54.1" cy="80.5" rx="0.9" ry="0.5" fill="#c09070" opacity="0.65"/><ellipse cx="62.6" cy="66.0" rx="1.2" ry="0.3" fill="#9a6a50" opacity="0.65"/><ellipse cx="123.5" cy="81.0" rx="1.1" ry="0.5" fill="#c09070" opacity="0.65"/><ellipse cx="71.5" cy="66.1" rx="0.5" ry="0.6" fill="#b08060" opacity="0.65"/><ellipse cx="122.0" cy="83.7" rx="1.1" ry="0.3" fill="#9a6a50" opacity="0.65"/><ellipse cx="38.7" cy="62.2" rx="1.0" ry="0.7" fill="#9a6a50" opacity="0.65"/><ellipse cx="51.9" cy="58.7" rx="1.0" ry="0.3" fill="#7a5a48" opacity="0.65"/><ellipse cx="97.7" cy="87.3" rx="0.9" ry="0.6" fill="#7a5a48" opacity="0.65"/><ellipse cx="116.2" cy="72.8" rx="1.2" ry="0.6" fill="#7a5a48" opacity="0.65"/><ellipse cx="126.8" cy="75.6" rx="0.6" ry="0.5" fill="#b08060" opacity="0.65"/><ellipse cx="102.6" cy="55.2" rx="0.7" ry="0.5" fill="#9a6a50" opacity="0.65"/><ellipse cx="126.1" cy="59.5" rx="0.6" ry="0.5" fill="#c09070" opacity="0.65"/><ellipse cx="130.3" cy="82.9" rx="0.5" ry="0.5" fill="#7a5a48" opacity="0.65"/><ellipse cx="71.6" cy="73.8" rx="0.6" ry="0.5" fill="#7a5a48" opacity="0.65"/><ellipse cx="0.1" cy="64.2" rx="1.0" ry="0.6" fill="#9a6a50" opacity="0.65"/><ellipse cx="61.9" cy="75.1" rx="0.9" ry="0.3" fill="#8a8f96" opacity="0.65"/><ellipse cx="30.7" cy="77.8" rx="0.5" ry="0.5" fill="#c09070" opacity="0.65"/><ellipse cx="88.7" cy="69.1" rx="0.7" ry="0.5" fill="#7a5a48" opacity="0.65"/><ellipse cx="97.9" cy="63.3" rx="0.8" ry="0.5" fill="#c09070" opacity="0.65"/><ellipse cx="86.5" cy="84.9" rx="0.5" ry="0.5" fill="#b08060" opacity="0.65"/><ellipse cx="55.7" cy="76.7" rx="0.8" ry="0.4" fill="#b08060" opacity="0.65"/><ellipse cx="47.4" cy="76.2" rx="0.7" ry="0.7" fill="#9a6a50" opacity="0.65"/><ellipse cx="89.3" cy="57.0" rx="0.9" ry="0.5" fill="#7a5a48" opacity="0.65"/><ellipse cx="49.1" cy="82.8" rx="0.4" ry="0.6" fill="#9a6a50" opacity="0.65"/><ellipse cx="13.3" cy="69.1" rx="0.5" ry="0.3" fill="#8a8f96" opacity="0.65"/><ellipse cx="16.9" cy="71.1" rx="1.0" ry="0.6" fill="#8a8f96" opacity="0.65"/><ellipse cx="49.2" cy="85.1" rx="1.1" ry="0.5" fill="#7a5a48" opacity="0.65"/><ellipse cx="113.9" cy="73.0" rx="1.2" ry="0.4" fill="#8a8f96" opacity="0.65"/><ellipse cx="83.5" cy="79.9" rx="0.6" ry="0.5" fill="#c09070" opacity="0.65"/><ellipse cx="63.6" cy="82.7" rx="0.5" ry="0.4" fill="#8a8f96" opacity="0.65"/><ellipse cx="47.4" cy="71.4" rx="0.9" ry="0.7" fill="#7a5a48" opacity="0.65"/><ellipse cx="38.3" cy="80.5" rx="0.9" ry="0.5" fill="#c09070" opacity="0.65"/><ellipse cx="126.8" cy="62.1" rx="1.1" ry="0.6" fill="#c09070" opacity="0.65"/><ellipse cx="10.7" cy="82.8" rx="0.4" ry="0.5" fill="#9a6a50" opacity="0.65"/><ellipse cx="89.5" cy="54.9" rx="0.8" ry="0.5" fill="#b08060" opacity="0.65"/><ellipse cx="85.8" cy="57.3" rx="0.7" ry="0.7" fill="#7a5a48" opacity="0.65"/><ellipse cx="63.7" cy="83.9" rx="0.5" ry="0.3" fill="#b08060" opacity="0.65"/><ellipse cx="96.9" cy="83.6" rx="0.9" ry="0.4" fill="#8a8f96" opacity="0.65"/><ellipse cx="79.9" cy="68.1" rx="0.6" ry="0.3" fill="#9a6a50" opacity="0.65"/><ellipse cx="56.1" cy="77.4" rx="0.5" ry="0.3" fill="#9a6a50" opacity="0.65"/><ellipse cx="62.0" cy="75.5" rx="1.1" ry="0.7" fill="#b08060" opacity="0.65"/><ellipse cx="65.3" cy="58.4" rx="1.1" ry="0.4" fill="#7a5a48" opacity="0.65"/><ellipse cx="9.7" cy="75.2" rx="1.2" ry="0.5" fill="#b08060" opacity="0.65"/><ellipse cx="95.6" cy="63.5" rx="1.1" ry="0.4" fill="#9a6a50" opacity="0.65"/><ellipse cx="68.0" cy="82.4" rx="1.1" ry="0.4" fill="#8a8f96" opacity="0.65"/><ellipse cx="41.9" cy="71.9" rx="0.9" ry="0.4" fill="#b08060" opacity="0.65"/><ellipse cx="89.0" cy="60.7" rx="0.8" ry="0.3" fill="#b08060" opacity="0.65"/><ellipse cx="65.5" cy="81.7" rx="0.7" ry="0.4" fill="#c09070" opacity="0.65"/><ellipse cx="128.6" cy="58.3" rx="0.6" ry="0.3" fill="#8a8f96" opacity="0.65"/><ellipse cx="68.5" cy="70.2" rx="1.0" ry="0.6" fill="#8a8f96" opacity="0.65"/><ellipse cx="31.2" cy="67.6" rx="1.1" ry="0.6" fill="#7a5a48" opacity="0.65"/><ellipse cx="33.0" cy="56.4" rx="0.7" ry="0.6" fill="#c09070" opacity="0.65"/><ellipse cx="89.3" cy="80.8" rx="0.7" ry="0.6" fill="#7a5a48" opacity="0.65"/><ellipse cx="41.6" cy="61.0" rx="1.2" ry="0.4" fill="#9a6a50" opacity="0.65"/><ellipse cx="78.1" cy="84.8" rx="1.0" ry="0.7" fill="#9a6a50" opacity="0.65"/><ellipse cx="83.1" cy="71.1" rx="0.6" ry="0.6" fill="#8a8f96" opacity="0.65"/><ellipse cx="115.9" cy="60.1" rx="1.0" ry="0.7" fill="#7a5a48" opacity="0.65"/><ellipse cx="123.1" cy="80.8" rx="0.6" ry="0.5" fill="#7a5a48" opacity="0.65"/><ellipse cx="75.2" cy="59.5" rx="0.8" ry="0.3" fill="#7a5a48" opacity="0.65"/><ellipse cx="10.9" cy="67.1" rx="0.8" ry="0.4" fill="#8a8f96" opacity="0.65"/><ellipse cx="64.4" cy="68.8" rx="0.4" ry="0.5" fill="#7a5a48" opacity="0.65"/><ellipse cx="128.3" cy="64.7" rx="0.9" ry="0.6" fill="#7a5a48" opacity="0.65"/><ellipse cx="16.3" cy="76.6" rx="1.0" ry="0.3" fill="#7a5a48" opacity="0.65"/><ellipse cx="12.8" cy="72.1" rx="0.5" ry="0.5" fill="#9a6a50" opacity="0.65"/><ellipse cx="41.8" cy="62.8" rx="1.1" ry="0.7" fill="#7a5a48" opacity="0.65"/><ellipse cx="85.2" cy="79.3" rx="0.5" ry="0.4" fill="#c09070" opacity="0.65"/><ellipse cx="68.5" cy="56.3" rx="1.0" ry="0.6" fill="#c09070" opacity="0.65"/><ellipse cx="80.3" cy="84.2" rx="0.5" ry="0.4" fill="#c09070" opacity="0.65"/><ellipse cx="40.9" cy="86.5" rx="0.5" ry="0.4" fill="#c09070" opacity="0.65"/><ellipse cx="83.0" cy="72.7" rx="0.7" ry="0.6" fill="#8a8f96" opacity="0.65"/><ellipse cx="0.2" cy="80.9" rx="0.7" ry="0.7" fill="#8a8f96" opacity="0.65"/><ellipse cx="45.9" cy="59.6" rx="1.0" ry="0.4" fill="#8a8f96" opacity="0.65"/><ellipse cx="86.4" cy="63.8" rx="0.8" ry="0.4" fill="#c09070" opacity="0.65"/><ellipse cx="14.1" cy="76.3" rx="0.9" ry="0.5" fill="#b08060" opacity="0.65"/><ellipse cx="64.6" cy="71.4" rx="1.1" ry="0.5" fill="#b08060" opacity="0.65"/><ellipse cx="109.0" cy="57.7" rx="0.5" ry="0.6" fill="#c09070" opacity="0.65"/><ellipse cx="123.7" cy="81.4" rx="0.9" ry="0.4" fill="#b08060" opacity="0.65"/><ellipse cx="120.3" cy="67.4" rx="1.1" ry="0.5" fill="#9a6a50" opacity="0.65"/><ellipse cx="46.5" cy="56.6" rx="0.6" ry="0.6" fill="#b08060" opacity="0.65"/><ellipse cx="45.9" cy="71.4" rx="0.4" ry="0.6" fill="#c09070" opacity="0.65"/><ellipse cx="66.8" cy="80.6" rx="1.2" ry="0.6" fill="#7a5a48" opacity="0.65"/><ellipse cx="69.4" cy="57.5" rx="0.7" ry="0.3" fill="#8a8f96" opacity="0.65"/><ellipse cx="56.2" cy="54.9" rx="1.1" ry="0.3" fill="#b08060" opacity="0.65"/><ellipse cx="48.7" cy="63.4" rx="1.0" ry="0.3" fill="#7a5a48" opacity="0.65"/><ellipse cx="81.6" cy="76.7" rx="0.5" ry="0.3" fill="#7a5a48" opacity="0.65"/><ellipse cx="101.0" cy="52.5" rx="0.5" ry="0.6" fill="#b08060" opacity="0.65"/><ellipse cx="26.4" cy="85.9" rx="0.7" ry="0.6" fill="#c09070" opacity="0.65"/><ellipse cx="40.0" cy="78.5" rx="0.8" ry="0.3" fill="#c09070" opacity="0.65"/><ellipse cx="127.9" cy="55.6" rx="1.1" ry="0.5" fill="#9a6a50" opacity="0.65"/><ellipse cx="123.8" cy="86.5" rx="1.1" ry="0.4" fill="#b08060" opacity="0.65"/><ellipse cx="29.5" cy="85.5" rx="0.6" ry="0.5" fill="#c09070" opacity="0.65"/><ellipse cx="89.9" cy="82.2" rx="0.5" ry="0.5" fill="#b08060" opacity="0.65"/><ellipse cx="4.4" cy="81.2" rx="0.6" ry="0.4" fill="#7a5a48" opacity="0.65"/><ellipse cx="124.4" cy="67.1" rx="1.1" ry="0.5" fill="#8a8f96" opacity="0.65"/><ellipse cx="53.3" cy="66.8" rx="0.7" ry="0.4" fill="#8a8f96" opacity="0.65"/><ellipse cx="72.1" cy="66.8" rx="1.1" ry="0.5" fill="#c09070" opacity="0.65"/><ellipse cx="60.2" cy="65.3" rx="0.7" ry="0.5" fill="#9a6a50" opacity="0.65"/><ellipse cx="35.6" cy="65.6" rx="0.4" ry="0.6" fill="#9a6a50" opacity="0.65"/><ellipse cx="31.4" cy="57.7" rx="0.9" ry="0.6" fill="#c09070" opacity="0.65"/><ellipse cx="21.5" cy="71.3" rx="0.5" ry="0.6" fill="#c09070" opacity="0.65"/><ellipse cx="65.1" cy="72.0" rx="0.7" ry="0.4" fill="#7a5a48" opacity="0.65"/><ellipse cx="127.9" cy="66.1" rx="0.9" ry="0.5" fill="#b08060" opacity="0.65"/><ellipse cx="76.4" cy="71.2" rx="0.8" ry="0.7" fill="#8a8f96" opacity="0.65"/></g>
</g>
</svg>
<div class="t" style="left:452.73px;top:416.50px;font-size:18px;color:#000;letter-spacing:0.400px;">download.jpg</div>
<svg class="a" style="left:593px;top:360px;" width="96" height="21" viewBox="0 0 96 21"><path d="M0.5 10.5L30 1L26 8H96V13H26L30 20Z" fill="#000"/></svg>
<div class="t" style="left:697.07px;top:351.70px;font-size:33px;color:#000;font-weight:bold;letter-spacing:0.217px;">Picture selected</div>
<div class="a" style="left:843.3px;top:790.3px;width:146.4px;height:53.5px;border:5px solid #000;border-radius:5px;box-sizing:border-box;"></div>
<svg class="a" style="left:910.5px;top:845px;" width="20" height="59" viewBox="0 0 20 59"><path d="M10 0L20 29L12.4 25V58.5H7.6V25L0 29Z" fill="#000"/></svg>
<div class="t" style="left:822.42px;top:905.50px;font-size:30px;color:#000;font-weight:bold;letter-spacing:0.400px;transform:scaleX(1.0252);transform-origin:0 0;">Insert Button</div>
</body></html>
